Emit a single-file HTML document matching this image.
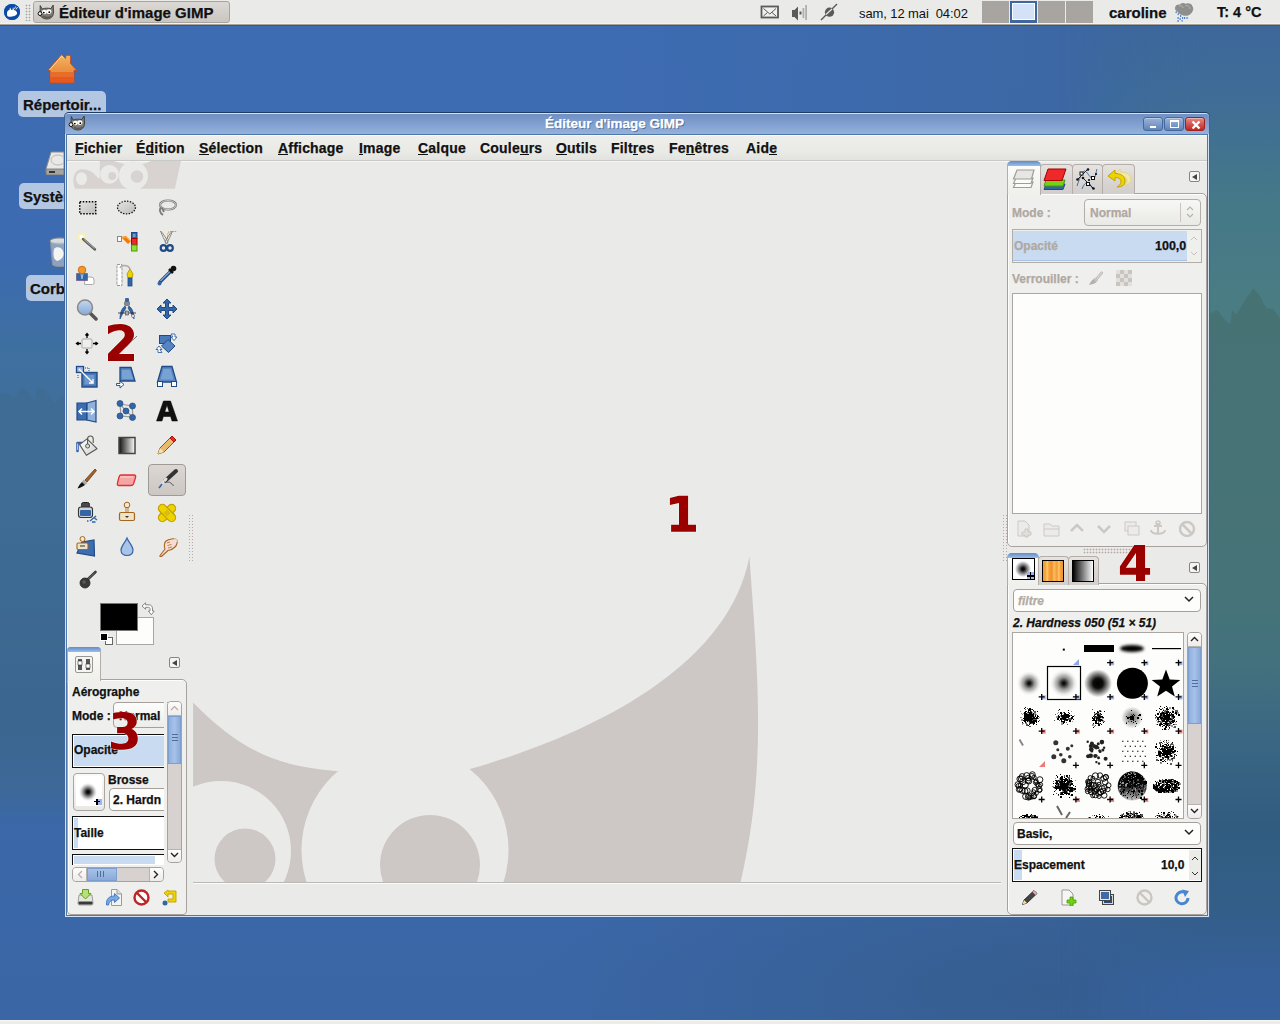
<!DOCTYPE html>
<html><head><meta charset="utf-8">
<style>
*{margin:0;padding:0;box-sizing:border-box}
html,body{width:1280px;height:1024px;overflow:hidden;font-family:"Liberation Sans",sans-serif;}
body{position:relative;background:#3c69ad;}
.a{position:absolute}
.b{font-weight:bold}
.b,.lbl,.menu,.dl{-webkit-text-stroke:0.25px currentColor}
#desk{left:0;top:0;width:1280px;height:1024px;background:
 radial-gradient(ellipse 520px 160px at 1050px 990px,rgba(48,86,130,0.5),rgba(48,86,130,0) 100%),
 linear-gradient(90deg,rgba(60,100,150,0) 0px,rgba(60,100,150,0) 600px,rgba(60,100,150,0.3) 900px,rgba(58,98,145,0.6) 1280px),
 linear-gradient(180deg,#3d6cb3 0px,#3d6bb1 300px,#3c69aa 700px,#3a66a6 1024px);}
#deskR{left:1060px;top:24px;width:220px;height:996px;
 background:linear-gradient(180deg,#3d679a 0px,#3f6d96 76px,#457888 176px,#4a7c84 266px,#4a7c84 300px,#467676 560px,#43717e 640px,#3a6684 720px,#315c80 800px,#335e88 880px,#36609a 960px,#37609c 996px);
 -webkit-mask-image:linear-gradient(90deg,transparent 0px,rgba(0,0,0,0.7) 80px,#000 150px);}
#deskL{left:0;top:24px;width:120px;height:996px;
 background:linear-gradient(180deg,rgba(62,108,158,0) 0px,rgba(62,108,158,0) 230px,#3f70a0 330px,#3f6f9c 376px,#3d6a92 546px,#3b668f 696px,#3d6898 766px,rgba(58,100,164,0) 800px);
 -webkit-mask-image:linear-gradient(90deg,#000 0px,#000 64px,transparent 120px);}
#panel{left:0;top:0;width:1280px;height:25px;background:#eaebe8;border-bottom:1px solid #aaa39b;box-shadow:0 1px 0 rgba(30,80,150,0.6)}
#panel:after{content:"";position:absolute;left:0;right:0;bottom:0;height:1px;background:#f2f3f0}
.ptxt{font-size:14px;color:#111;top:4px;white-space:nowrap}
.dl{background:#b3c7e3;border-radius:5px;font-size:15px;font-weight:bold;color:#111;white-space:nowrap;overflow:hidden;line-height:27px}
#win{left:65px;top:113px;width:1144px;height:803px;background:#eaebe8;border:1px solid #2e5284;border-radius:6px 6px 0 0}
#title{left:0;top:0;width:1142px;height:21px;background:linear-gradient(180deg,#6e8fc2 0%,#8aa8d6 60%,#9ab6e0 100%);border-radius:5px 5px 0 0}
.tbtn{top:117px;width:20px;height:14px;border:1px solid #44679c;border-radius:3px;background:linear-gradient(180deg,#98b2d8 0%,#7f9ccb 50%,#5e83b8 100%);box-shadow:inset 0 1px 0 rgba(255,255,255,0.35)}
.red2{border-color:#a51e1e;background:linear-gradient(180deg,#e48a84 0%,#d55650 50%,#b92a26 100%)}
.menu{top:140px;font-size:14px;font-weight:bold;color:#111;white-space:nowrap;letter-spacing:0.2px}
.menu u{text-decoration:none;position:relative}
.menu u:after{content:"";position:absolute;left:0;right:0;top:14px;height:1.4px;background:#111}
.arrbox{width:11px;height:11px;border:1px solid #8a8580;border-radius:2px;background:#f4f4f2}
.arrbox:after{content:"";position:absolute;left:2px;top:2px;border-right:5px solid #444;border-top:3.5px solid transparent;border-bottom:3.5px solid transparent}
.tabi{height:30px;border:1px solid #b5aea8;border-bottom:none;border-radius:4px 4px 0 0;background:linear-gradient(180deg,#e6e3e0,#d8d4d1 60%,#d2cecb)}
.lbl{font-size:12px;font-weight:bold;white-space:nowrap;color:#111;margin-top:1px}
.lbl.dis{color:#b0a8a2}
.red{color:#9a0000;font-weight:bold;font-size:50px;line-height:50px}
</style></head><body>
<div id="desk" class="a"></div><div id="deskR" class="a"></div><div id="deskL" class="a"></div><svg class="a" style="left:0;top:280px" width="1280" height="500" viewBox="0 280 1280 500"><defs><linearGradient id="trR" x1="0" y1="0" x2="0" y2="1"><stop offset="0" stop-color="#467274"/><stop offset="0.6" stop-color="#467276" stop-opacity="0.8"/><stop offset="1" stop-color="#43707e" stop-opacity="0"/></linearGradient><linearGradient id="trL" x1="0" y1="0" x2="0" y2="1"><stop offset="0" stop-color="#3e6b92" stop-opacity="0.8"/><stop offset="0.7" stop-color="#3e6b92" stop-opacity="0.4"/><stop offset="1" stop-color="#3e6b92" stop-opacity="0"/></linearGradient></defs>
<path d="M1190 318 L1208 314 L1217.4 310.3 L1226 321 L1230.3 323.8 L1232 310.8 L1237 314 L1245 300 L1253.5 288.1 L1260 296 L1266 308 L1273 309 L1280 318 L1280 700 L1190 700 Z" fill="url(#trR)"/>
<path d="M0 393 L6 393 L14 398 L22 387 L30 394 L35 402 L37 387 L45 390 L55 403 L62 395 L70 400 L70 640 L0 640 Z" fill="url(#trL)"/>
</svg>

<div class="a" style="left:0;top:1020px;width:1280px;height:4px;background:#edece9;border-top:1px solid #f8f8f4"></div>

<!-- top panel -->
<div id="panel" class="a"></div>
<div class="a" style="left:4px;top:4px;width:16px;height:16px;border-radius:50%;background:#1f5fb5"></div>
<div class="a" style="left:33px;top:1px;width:197px;height:22px;border:1px solid #a9a49f;border-radius:3px;background:linear-gradient(180deg,#dcd8d4,#c9c5c1)"></div>
<div class="a ptxt b" style="left:59px;font-size:15px;top:4px">Éditeur d'image GIMP</div>
<div class="a ptxt" style="left:859px;font-size:13px;top:6px;letter-spacing:-0.1px">sam, 12 mai&nbsp; 04:02</div>
<div class="a" style="left:982px;top:1px;width:27px;height:22px;background:#a8a4a0"></div>
<div class="a" style="left:1010px;top:1px;width:27px;height:22px;background:#d4e2f7;border:2px solid #3e66a0;border-bottom-width:3px;box-shadow:inset 0 0 0 1px #fff"></div>
<div class="a" style="left:1038px;top:1px;width:27px;height:22px;background:#a8a4a0"></div>
<div class="a" style="left:1066px;top:1px;width:27px;height:22px;background:#a8a4a0"></div>
<div class="a ptxt b" style="left:1109px;font-size:15px;top:3.5px">caroline</div>
<div class="a ptxt b" style="left:1217px;font-size:14.5px;top:4px">T: 4 °C</div>

<!-- desktop icons -->
<svg class="a" style="left:44px;top:50px" width="36" height="36" viewBox="44 50 36 36"><defs><linearGradient id="hroof" x1="0" y1="0" x2="0" y2="1"><stop offset="0" stop-color="#f2b865"/><stop offset="0.5" stop-color="#ea9444"/><stop offset="1" stop-color="#e8853a"/></linearGradient></defs>
<path d="M47.5 70.6 L61.7 54.5 L65.5 58.5 L66 55.3 L70.6 55.3 L70.6 63.5 L76.9 70.6 L74 70.6 L74 82.8 L50.1 82.8 L50.1 70.6 Z" fill="url(#hroof)" stroke="#c8441a" stroke-width="0.9"/>
<rect x="50.6" y="72" width="23" height="5" fill="#e96d2a"/><rect x="50.6" y="77" width="23" height="5.4" fill="#e8581f"/>
<path d="M49.5 70 L61.7 56 L64 58.5" stroke="#f7d79a" stroke-width="1" fill="none"/></svg>
<div class="a dl" style="left:18px;top:91px;width:88px;height:26px;padding-left:5px">Répertoir...</div>
<svg class="a" style="left:44px;top:148px" width="22" height="30"><path d="M7 4 L20 4 L20 25 L2 25 L2 21 Z" fill="#e8e8e6" stroke="#8a8a88" stroke-width="1"/><path d="M2 21 L20 21 L20 27 L2 27 Z" fill="#a5a5a3" stroke="#6f6f6d" stroke-width="0.8"/><rect x="5" y="23" width="6" height="2" fill="#333"/><ellipse cx="14" cy="12" rx="7" ry="5" fill="none" stroke="#b8b8b6"/></svg>
<div class="a dl" style="left:19px;top:183px;width:50px;height:26px;padding-left:4px">Système</div>
<svg class="a" style="left:48px;top:236px" width="20" height="34"><ellipse cx="12" cy="5" rx="10" ry="3" fill="#d8dcdf" stroke="#8d9296"/><path d="M2.5 6 L4.5 29 C7 31 17 31 19.5 29 L21.5 6" fill="#c2c8cc" fill-opacity="0.6" stroke="#8d9296"/><path d="M6 13 C8 10 14 11 15 15 C17 19 14 24 9 25 C5 23 5 18 6 13Z" fill="#f4f4f2"/></svg>
<div class="a dl" style="left:26px;top:275px;width:50px;height:26px;padding-left:4px">Corbeille</div>
<!-- window -->
<div class="a" style="left:64px;top:112px;width:1146px;height:806px;background:#3f649b;border-radius:5px 5px 0 0;border-top:1px solid #1f3b62"></div>
<div class="a" style="left:65px;top:113px;width:1144px;height:804px;background:#d3e1f5;border-radius:4px 4px 0 0"></div>
<div class="a" style="left:65px;top:114px;width:1144px;height:20px;background:linear-gradient(180deg,#7191c3 0%,#7f9ecd 45%,#95b2dc 100%);border-radius:3px 3px 0 0"></div>
<div class="a" style="left:66px;top:134px;width:1142px;height:782px;background:#4f78ad"></div>
<div class="a" style="left:67px;top:135px;width:1140px;height:780px;background:#eaebe8;border-top:1px solid #fafaf6;border-left:1px solid #f6f6f2"></div>
<!-- menubar -->
<div class="a" style="left:67px;top:136px;width:1140px;height:25px;background:linear-gradient(180deg,#eeeeeb 0%,#e9e9e6 70%,#e2e2df 100%);border-bottom:1px solid #c9c9c5"></div>
<div class="a" style="left:67px;top:161px;width:1140px;height:1px;background:#f6f6f3"></div>
<!-- title bar -->
<div class="a b" style="left:545px;top:116px;font-size:13.5px;color:#fff;white-space:nowrap;text-shadow:1px 1px 0 rgba(30,50,90,0.55)">Éditeur d'image GIMP</div>
<div class="a tbtn" style="left:1143px"><div class="a" style="left:6px;top:8px;width:6px;height:2px;background:#fff"></div></div>
<div class="a tbtn" style="left:1164px"><div class="a" style="left:5px;top:2px;width:9px;height:8px;border:1.5px solid #fff;border-top-width:2px"></div></div>
<div class="a tbtn red2" style="left:1185px"><svg class="a" style="left:5px;top:1.5px" width="10" height="10" viewBox="0 0 10 10"><path d="M1.5 1.5L8.5 8.5M8.5 1.5L1.5 8.5" stroke="#fff" stroke-width="2.4"/></svg></div>
<!-- panel icons -->
<svg class="a" style="left:3px;top:3px" width="18" height="18"><circle cx="9" cy="9" r="8" fill="#0c4aa8"/><path d="M4 11 C4 8 5 7 6.5 7 L7 4.5 L8.5 7 L9.5 7 L10 4 L11 7 C13 7.5 14.5 9 14 11 C12.5 13.5 8 14 5 13.5 C4.3 13 4 12 4 11Z" fill="#fff"/><path d="M11.5 6 L12.5 3.5 M13 6.5 L14.5 4" stroke="#fff" stroke-width="0.8"/></svg>
<div class="a" style="left:25px;top:4px;width:6px;height:17px;background-image:radial-gradient(circle,#aaa5a0 0.8px,transparent 1.1px);background-size:3px 3px"></div>
<svg class="a" style="left:37px;top:4px" width="18" height="16" viewBox="0 0 18 16"><path d="M3.2 1.5 L5.2 5 C8 4 11 4 13.8 4.6 L16.2 1 L16.6 8 C16.6 12 14 15 10 15 C7 15 4.5 13.5 3 11.5 Z" fill="#807c72" stroke="#2e2e2c" stroke-width="0.8" stroke-linejoin="round"/><path d="M6 12 C8 14 12 14 14.5 12" stroke="#5a564e" stroke-width="1.5" fill="none"/><ellipse cx="7.3" cy="8" rx="2.4" ry="2.3" fill="#fff"/><ellipse cx="11.8" cy="7.6" rx="2.6" ry="2.4" fill="#fff"/><circle cx="6.8" cy="8.6" r="0.9" fill="#000"/><circle cx="12.3" cy="8.2" r="0.9" fill="#000"/><circle cx="3" cy="9.6" r="1.9" fill="#f4f4f4" stroke="#111" stroke-width="1"/></svg>
<svg class="a" style="left:760px;top:5px" width="20" height="14"><rect x="1.5" y="1.5" width="16.5" height="11" fill="#f0f0ee" stroke="#5a5a5a" stroke-width="1.8"/><path d="M3.5 3.5 L9.8 9 L16 3.5 M3.5 11 L7.5 7.5 M16 11 L12 7.5" stroke="#5a5a5a" stroke-width="1" fill="none"/></svg>
<svg class="a" style="left:790px;top:4px" width="20" height="18"><path d="M2 6 H4.5 L8 2.5 V16.5 L4.5 13 H2 Z" fill="#5a5a5a"/><rect x="9.5" y="7.5" width="2" height="3" fill="#5a5a5a"/><rect x="12.5" y="4" width="1.8" height="10" fill="#b0b0ae"/><rect x="15.2" y="1" width="1.8" height="15" fill="#b0b0ae"/></svg>
<svg class="a" style="left:819px;top:3px" width="20" height="18"><path d="M2 17 L18 1" stroke="#5a5a5a" stroke-width="1.5"/><circle cx="10.5" cy="9.2" r="4.6" fill="#5a5a5a"/><path d="M7 11.5 L13 6" stroke="#edecea" stroke-width="1.1"/></svg>
<svg class="a" style="left:1173px;top:2px" width="22" height="20"><g fill="#4b7ed0"><rect x="3" y="9" width="1.2" height="2" transform="rotate(20 3 9)"/><rect x="5" y="11" width="1.2" height="2" transform="rotate(20 5 11)"/><rect x="7" y="13" width="1.2" height="2"/><rect x="4.5" y="15" width="1.2" height="2"/><rect x="6.5" y="16" width="1.2" height="2"/><rect x="4.5" y="18" width="1.2" height="2"/><rect x="9" y="15" width="1.2" height="2"/><rect x="11" y="15" width="1.2" height="2"/><rect x="13.5" y="15" width="1.2" height="2"/><rect x="8.5" y="18" width="1.2" height="1.6"/></g><path d="M2 6 C2 3 5 2 7 2.5 C8 0.8 11 0.5 12.5 1.8 C15 0.5 19 1.5 19.5 4.5 C21 6 20 10 18 11.5 C16 14 12 14.5 9 13 C7 12.5 5 11 4 9 C2.5 8.5 2 7.5 2 6Z" fill="#8e8e8c"/><path d="M6 4 C8 3 10 4 10 6 M12 4 C14 3 17 4 17 7" stroke="#b5b5b3" stroke-width="1" fill="none"/></svg>
<!-- title bar gimp icon -->
<svg class="a" style="left:68px;top:115px" width="18" height="16" viewBox="0 0 18 16"><path d="M3.2 1.5 L5.2 5 C8 4 11 4 13.8 4.6 L16.2 1 L16.6 8 C16.6 12 14 15 10 15 C7 15 4.5 13.5 3 11.5 Z" fill="#807c72" stroke="#2e2e2c" stroke-width="0.8" stroke-linejoin="round"/><path d="M6 12 C8 14 12 14 14.5 12" stroke="#5a564e" stroke-width="1.5" fill="none"/><ellipse cx="7.3" cy="8" rx="2.4" ry="2.3" fill="#fff"/><ellipse cx="11.8" cy="7.6" rx="2.6" ry="2.4" fill="#fff"/><circle cx="6.8" cy="8.6" r="0.9" fill="#000"/><circle cx="12.3" cy="8.2" r="0.9" fill="#000"/><circle cx="3" cy="9.6" r="1.9" fill="#f4f4f4" stroke="#111" stroke-width="1"/></svg>
<div class="a menu" style="left:75px"><u>F</u>ichier</div>
<div class="a menu" style="left:136px">É<u>d</u>ition</div>
<div class="a menu" style="left:199px"><u>S</u>élection</div>
<div class="a menu" style="left:278px"><u>A</u>ffichage</div>
<div class="a menu" style="left:359px"><u>I</u>mage</div>
<div class="a menu" style="left:418px"><u>C</u>alque</div>
<div class="a menu" style="left:480px">Coule<u>u</u>rs</div>
<div class="a menu" style="left:556px"><u>O</u>utils</div>
<div class="a menu" style="left:611px">Filt<u>r</u>es</div>
<div class="a menu" style="left:669px">Fe<u>n</u>êtres</div>
<div class="a menu" style="left:746px">Aid<u>e</u></div>

<!-- canvas -->
<svg class="a" style="left:193px;top:540px" width="809" height="343" viewBox="193 540 809 343">
 <path d="M193.1 702.5 C238.6 748.4 273.7 766.4 338.1 771.2 L404 790 L469.8 769.1 C571.6 740.3 727.3 675.2 749.4 556.6 C757.6 671.5 767.3 768.3 740.6 882.0 L193 882 Z" fill="#cdc8c6"/>
 <circle cx="221" cy="851" r="70" fill="#eaebe8"/>
 <circle cx="245" cy="859" r="30.5" fill="#cdc8c6"/>
 <circle cx="405" cy="850" r="103.5" fill="#eaebe8"/>
 <circle cx="430" cy="865" r="50" fill="#cdc8c6"/>
</svg>
<div class="a" style="left:193px;top:882px;width:808px;height:1px;background:#b9b9b5"></div>
<div class="a" style="left:193px;top:883px;width:808px;height:1px;background:#fbfbf8"></div>
<!-- toolbox -->
<svg class="a" style="left:68px;top:158px" width="120" height="36" viewBox="68 158 120 36">
 <path d="M75.2 188.7 C72.5 183 72.5 175 77 171 C80 168.5 86 168.5 91 171.6 C94 173.5 96.5 176 98.1 178.2 L99.8 178.2 L99.8 161 L113.6 161 L124 164.1 L143.3 164.1 L151.3 161 L181 161 L174.9 188.7 Z" fill="#d8d3d1"/>
 <circle cx="109.4" cy="174.4" r="9.3" fill="#eaebe8"/>
 <circle cx="112.2" cy="176" r="4" fill="#d8d3d1"/>
 <circle cx="133.4" cy="175.8" r="14.5" fill="#eaebe8"/>
 <circle cx="137" cy="176.5" r="6.3" fill="#d8d3d1"/>
 <ellipse cx="81.5" cy="178.6" rx="5.5" ry="6.4" fill="#eaebe8"/>
</svg>
<!-- selected tool button -->
<div class="a" style="left:148px;top:464px;width:38px;height:32px;border:1px solid #a09a96;border-radius:4px;background:linear-gradient(180deg,#dcd7d3,#ccc7c3)"></div>

<!-- row0 -->
<svg class="a" style="left:75px;top:195px" width="24" height="24"><defs><linearGradient id="gg" x1="0" y1="0" x2="1" y2="1"><stop offset="0" stop-color="#e4e4e2"/><stop offset="1" stop-color="#bdbdbb"/></linearGradient></defs>
 <rect x="4.75" y="6.75" width="16" height="12" fill="url(#gg)" stroke="#000" stroke-width="1.5" stroke-dasharray="1.5 1.5"/></svg>
<svg class="a" style="left:115px;top:195px" width="24" height="24"><ellipse cx="11.5" cy="12.5" rx="9" ry="6.3" fill="url(#gg)" stroke="#111" stroke-width="1.3" stroke-dasharray="1.4 1.4"/></svg>
<svg class="a" style="left:155px;top:195px" width="24" height="24"><ellipse cx="13" cy="10" rx="8" ry="4.5" fill="none" stroke="#7a7a78" stroke-width="2.2"/><ellipse cx="13" cy="10" rx="8" ry="4.5" fill="none" stroke="#d8d8d6" stroke-width="0.8"/><path d="M6 12 C4 15 5 18 8 20 M7 13 L9 17" stroke="#7a7a78" stroke-width="1.8" fill="none"/></svg>
<!-- row1 -->
<svg class="a" style="left:75px;top:229px" width="24" height="24"><circle cx="6.5" cy="8" r="4" fill="#fff3a0" opacity="0.8"/><circle cx="6.5" cy="8" r="2" fill="#fff"/><path d="M8 10 L20 20.5" stroke="#5a5a58" stroke-width="2.4" stroke-linecap="round"/><path d="M8.5 10 L19.5 19.6" stroke="#c8c8c4" stroke-width="0.8"/></svg>
<svg class="a" style="left:115px;top:229px" width="24" height="24"><rect x="2.5" y="7.5" width="4" height="5" fill="#fff" stroke="#888"/><path d="M6 8 L11 7 L16 12 L13 15 Z" fill="#f57900"/><path d="M7 9 L11 8 L15 12" stroke="#fcaf3e" fill="none"/><rect x="16.5" y="3.5" width="5.5" height="6" fill="#3465a4" stroke="#204a87"/><rect x="18" y="5" width="2.5" height="3" fill="#729fcf"/><rect x="16.5" y="9.5" width="5.5" height="6.5" fill="#ef2929" stroke="#a40000"/><rect x="16.5" y="16" width="5.5" height="6" fill="#8ae234" stroke="#4e9a06"/></svg>
<svg class="a" style="left:155px;top:229px" width="24" height="24"><path d="M5.5 2 C7 6 9.5 11 11.5 15 L13 13 C11 9 8 4 5.5 2Z M17.5 2 C16 6 13.5 11 11.5 15 L10 13 C12 9 15 4 17.5 2Z" fill="#eeeeec" stroke="#888a85" stroke-width="1"/><circle cx="8.5" cy="19" r="2.8" fill="none" stroke="#204a87" stroke-width="2.2"/><circle cx="15" cy="19" r="2.8" fill="none" stroke="#204a87" stroke-width="2.2"/><path d="M12.5 10 C12.5 5 13 2.5 15 2.5 L22 2.5" stroke="#f57900" stroke-width="1.1" stroke-dasharray="1.2 1" fill="none"/></svg>
<!-- row2 -->
<svg class="a" style="left:75px;top:263px" width="24" height="24"><path d="M10 14 h6 a3 3 0 0 1 3 3 v3 a1.5 1.5 0 0 1 -1.5 1.5 h-8 Z" fill="#fff" stroke="#aaa"/><rect x="1.5" y="10.5" width="11" height="7" fill="#3465a4" stroke="#5c3566" stroke-dasharray="1 1"/><circle cx="7" cy="7" r="3.8" fill="#f09a2a" stroke="#ce5c00" stroke-width="0.8"/><path d="M6 11 L7 16 L8 11" stroke="#9cc0ea" fill="none"/></svg>
<svg class="a" style="left:115px;top:263px" width="24" height="24"><rect x="2" y="1.5" width="5" height="21" fill="#fff" stroke="#999" stroke-dasharray="3 1"/><path d="M5 5 C6 2 13 1 15 6" stroke="#aaa" stroke-width="1.5" fill="none"/><path d="M15 6 L12 11 L13 15 L17 15 L18 11 Z" fill="#edd400" stroke="#c4a000"/><rect x="13" y="15" width="4" height="8" fill="#3465a4" stroke="#204a87" stroke-width="0.8"/></svg>
<svg class="a" style="left:155px;top:263px" width="24" height="24"><path d="M5 19 L16 8" stroke="#204a87" stroke-width="3.2" stroke-linecap="round"/><path d="M5.5 18 L15.5 8" stroke="#cfe0f5" stroke-width="1"/><path d="M14 6 L18 10" stroke="#111" stroke-width="2.5"/><circle cx="18.5" cy="5.5" r="2.8" fill="#111"/><circle cx="4.5" cy="20.5" r="2" fill="#3465a4"/></svg>
<!-- row3 -->
<svg class="a" style="left:75px;top:297px" width="24" height="24"><defs><linearGradient id="zg" x1="0" y1="0" x2="0" y2="1"><stop offset="0" stop-color="#c5d8f0"/><stop offset="1" stop-color="#86a9d8"/></linearGradient></defs><path d="M15 16 L21 22" stroke="#555" stroke-width="3.5" stroke-linecap="round"/><circle cx="10" cy="10.5" r="7.5" fill="url(#zg)" stroke="#8a8a88" stroke-width="1.5"/></svg>
<svg class="a" style="left:115px;top:297px" width="24" height="24"><rect x="10" y="1" width="4" height="4" rx="1" fill="#3465a4"/><rect x="9.5" y="4.5" width="5" height="4" rx="1" fill="#888" stroke="#555" stroke-width="0.6"/><path d="M10 9 C6 12 5 17 5 22 L8 16 L11 11 Z M14 9 C18 12 19 17 19 22 L16 16 L13 11 Z" fill="#3465a4" stroke="#204a87" stroke-width="0.7"/><path d="M3 16 L21 16" stroke="#222" stroke-width="0.8"/><rect x="10.5" y="14" width="3" height="4" fill="#aaa" stroke="#444" stroke-width="0.6"/><circle cx="18" cy="19" r="1.5" fill="#fff" stroke="#444" stroke-width="0.6"/></svg>
<svg class="a" style="left:155px;top:297px" width="24" height="24"><path d="M12 2 L16 6 L13.5 6 L13.5 10.5 L18 10.5 L18 8 L22 12 L18 16 L18 13.5 L13.5 13.5 L13.5 18 L16 18 L12 22 L8 18 L10.5 18 L10.5 13.5 L6 13.5 L6 16 L2 12 L6 8 L6 10.5 L10.5 10.5 L10.5 6 L8 6 Z" fill="#3465a4" stroke="#204a87" stroke-width="1" stroke-linejoin="round"/></svg>
<!-- row4 -->
<svg class="a" style="left:75px;top:331px" width="24" height="24"><rect x="7" y="8" width="10" height="9" rx="1" fill="#eeeeec" stroke="#aaa"/><path d="M12 7 V3 M10.5 4.5 L12 2.5 L13.5 4.5 M12 18 V22 M10.5 20.5 L12 22.5 L13.5 20.5 M6 12.5 H2 M3.5 11 L1.5 12.5 L3.5 14 M18 12.5 H22 M20.5 11 L22.5 12.5 L20.5 14" stroke="#000" stroke-width="1.3" fill="none"/></svg>
<svg class="a" style="left:115px;top:331px" width="24" height="24"><path d="M22 5 L14 13 M14 13 C13 15 11 16 9 16" stroke="#777" stroke-width="1" fill="none"/></svg>
<svg class="a" style="left:155px;top:331px" width="24" height="24"><rect x="4.5" y="4.5" width="11" height="8" fill="#4a7ab8" stroke="#204a87"/><path d="M13 8.5 L20 15 L13.5 21.5 L6.5 15 Z" fill="#5585c2" stroke="#204a87"/><path d="M16 3 L20 3 L20 6 L22 6 L19 9.5 L16 6 L18 6 Z" fill="#fff" stroke="#3465a4" stroke-width="0.9"/><path d="M7 21.5 L3 21.5 L3 18.5 L1 18.5 L4 15 L7 18.5 L5 18.5 Z" fill="#fff" stroke="#3465a4" stroke-width="0.9"/></svg>
<!-- row5 -->
<svg class="a" style="left:75px;top:365px" width="24" height="24"><rect x="7" y="7.5" width="15" height="14.5" fill="#4a79b8" stroke="#204a87" stroke-width="1.4"/><rect x="9.5" y="10" width="10" height="9.5" fill="#6f98cc"/><rect x="1.5" y="1.5" width="7" height="6" fill="#9bb8e0" stroke="#204a87" stroke-width="1.3"/><path d="M4 4 L18 18 M18 14 V18 H14" stroke="#fff" stroke-width="1.3" fill="none"/><path d="M10 3 H14 M14 3 V8 M3 10 V14" stroke="#204a87" stroke-dasharray="1 1"/></svg>
<svg class="a" style="left:115px;top:365px" width="24" height="24"><path d="M5 2.5 L16 2.5 L20 16 L5 16 Z" fill="#5a87c2" stroke="#204a87" stroke-width="1.3"/><path d="M7 5 L15 5 L18 14 L7 14 Z" fill="#78a1d4"/><path d="M1.5 18.5 H5 V16 L9 19.5 L5 23 V20.5 H1.5 Z" fill="#fff" stroke="#204a87" stroke-width="0.9"/></svg>
<svg class="a" style="left:155px;top:365px" width="24" height="24"><path d="M7 1.5 L17 1.5 L21.5 17 L2.5 17 Z" fill="#5a87c2" stroke="#204a87" stroke-width="1.3"/><path d="M8.5 4 L15.5 4 L18.5 14.5 L5.5 14.5 Z" fill="#78a1d4"/><rect x="2.5" y="16.5" width="5" height="5" fill="#fff" stroke="#204a87"/><rect x="16.5" y="16.5" width="5" height="5" fill="#fff" stroke="#204a87"/></svg>
<!-- row6 -->
<svg class="a" style="left:75px;top:399px" width="24" height="24"><path d="M2 4 L12 4 L12 21 L2 21 Z" fill="#3c6db0" stroke="#204a87" stroke-width="1.2"/><path d="M12 4 L21 1.5 L21 23 L12 21 Z" fill="#8fb1dc" stroke="#204a87" stroke-width="1.2"/><path d="M4 12.5 H19 M7 9.5 L4 12.5 L7 15.5 M16 9.5 L19 12.5 L16 15.5" stroke="#fff" stroke-width="1.5" fill="none"/></svg>
<svg class="a" style="left:115px;top:399px" width="24" height="24"><path d="M5 5 L17 7 L18 18 L6 17 Z M5 5 L11 12 L18 18" stroke="#999" stroke-width="1.2" fill="none"/><g fill="#3465a4" stroke="#204a87" stroke-width="0.7"><circle cx="5" cy="4.5" r="3"/><circle cx="17.5" cy="7" r="3"/><circle cx="11" cy="12" r="3"/><circle cx="5" cy="17" r="3"/><circle cx="17.5" cy="18.5" r="3"/></g></svg>
<svg class="a" style="left:155px;top:399px" width="24" height="24"><path d="M1.5 22 L8.5 2 L15.5 2 L22.5 22 L17 22 L15.6 17.5 L8.4 17.5 L7 22 Z M9.8 13 L14.2 13 L12 6 Z" fill="#111" stroke="#000" stroke-width="0.5" fill-rule="evenodd"/></svg>
<!-- row7 -->
<svg class="a" style="left:75px;top:433px" width="24" height="24"><defs><linearGradient id="bk" x1="0" y1="0" x2="1" y2="1"><stop offset="0" stop-color="#fff"/><stop offset="1" stop-color="#d0d0ce"/></linearGradient></defs><path d="M2.5 18 V10 H7" stroke="#3a5fa8" stroke-width="2.6" stroke-linecap="round" stroke-linejoin="round" fill="none"/><path d="M2.5 17 V10.5" stroke="#c8daf4" stroke-width="0.8"/><path d="M4.6 11.6 L12 5.9 L22 15.7 L11.4 22.3 Z" fill="url(#bk)" stroke="#555753" stroke-width="1.1" stroke-linejoin="round"/><path d="M12.6 12.5 V6 C12.6 2 18.2 2 18.2 6 V10" stroke="#555753" stroke-width="1.1" fill="none"/><circle cx="12.6" cy="13" r="2" fill="#ddd" stroke="#555753" stroke-width="1"/></svg>
<svg class="a" style="left:115px;top:433px" width="24" height="24"><defs><linearGradient id="bl" x1="0" y1="0" x2="1" y2="0"><stop offset="0" stop-color="#111"/><stop offset="1" stop-color="#fff"/></linearGradient></defs><rect x="4" y="4.5" width="16" height="16" fill="url(#bl)" stroke="#444" stroke-width="1.5"/></svg>
<svg class="a" style="left:155px;top:433px" width="24" height="24"><path d="M3 21 L5 15 L17 3 L21 7 L9 19 Z" fill="#e9b96e" stroke="#8f5902" stroke-width="1"/><path d="M17 3 L21 7 L19 9 L15 5 Z" fill="#ef2929" stroke="#a40000" stroke-width="0.8"/><path d="M3 21 L5 15 L9 19 Z" fill="#f3dfb8"/></svg>
<!-- row8 -->
<svg class="a" style="left:75px;top:467px" width="24" height="24"><path d="M10 13 L20 2 L21.5 3.5 L12 15 Z" fill="#a0622a" stroke="#6b3c13" stroke-width="0.8"/><path d="M8.5 12.5 L12.5 16 L10 18 L7 15 Z" fill="#aaa"/><path d="M7 15 L10 18 C7 20 5 21 2.5 21.5 C3.5 19 5 17 7 15Z" fill="#111"/></svg>
<svg class="a" style="left:115px;top:467px" width="24" height="24"><path d="M6 8 L19 8 C20.5 8 21 9 20.5 10.5 L18.5 17 C18 18 17.5 18.5 16 18.5 L4 18.5 C2.5 18.5 2 17.5 2.5 16 L4 10 C4.5 8.5 5 8 6 8Z" fill="#f4a6a6" stroke="#e03030" stroke-width="1.3"/><path d="M5 10 L18 10" stroke="#fbd0d0" stroke-width="1.2"/></svg>
<svg class="a" style="left:155px;top:467px" width="24" height="24"><path d="M21 4 L10 14" stroke="#333" stroke-width="4" stroke-linecap="round"/><path d="M11 12 L7 17" stroke="#ddd" stroke-width="3" stroke-linecap="round"/><path d="M7 17 L4 21" stroke="#3465a4" stroke-width="1.5"/><path d="M9 15 C12 16 14 14 16 16 C18 18 17 19 19 18" stroke="#555" stroke-width="0.9" fill="none"/></svg>
<!-- row9 -->
<svg class="a" style="left:75px;top:501px" width="24" height="24"><rect x="6.5" y="1.5" width="8" height="5" rx="2" fill="#4a4a4a" stroke="#222"/><rect x="3.5" y="6" width="14" height="10.5" rx="2.5" fill="#d0d4d8" stroke="#2e3436" stroke-width="1.1"/><rect x="5" y="9" width="11" height="6" rx="1" fill="#3465a4"/><path d="M15 20 L21 15 M17 21 L20.5 21 M19.5 17 L22 19 M12 20 L13.5 20" stroke="#3465a4" stroke-width="1.4"/></svg>
<svg class="a" style="left:115px;top:501px" width="24" height="24"><circle cx="12" cy="4" r="2.8" fill="#f4ead4" stroke="#a5651e" stroke-width="1"/><rect x="11" y="6.5" width="2" height="5" fill="#f4ead4" stroke="#a5651e" stroke-width="0.8"/><rect x="4.5" y="11.5" width="15" height="8" rx="1.5" fill="#ede3c7" stroke="#a5651e" stroke-width="1.2"/><path d="M10 15 L14 15 L12 17Z" fill="#333"/></svg>
<svg class="a" style="left:155px;top:501px" width="24" height="24"><g fill="#edd400" stroke="#c4a000" stroke-width="1.2"><rect x="8" y="1.5" width="8" height="21" rx="4" transform="rotate(45 12 12)"/><rect x="8" y="1.5" width="8" height="21" rx="4" transform="rotate(-45 12 12)"/></g><rect x="9.5" y="9.5" width="5" height="5" fill="#d8bc10" transform="rotate(45 12 12)"/></svg>
<!-- row10 -->
<svg class="a" style="left:75px;top:535px" width="24" height="24"><path d="M7 7 L19 5 L19.5 21 L2 18 Z" fill="#3c6db0" stroke="#204a87" stroke-width="1.2"/><circle cx="7.5" cy="4" r="2.5" fill="#f4ead4" stroke="#a5651e"/><rect x="2" y="8" width="11" height="6.5" rx="1.2" fill="#ede3c7" stroke="#a5651e" stroke-width="1.1"/><path d="M5 11 L10 11" stroke="#333"/></svg>
<svg class="a" style="left:115px;top:535px" width="24" height="24"><path d="M12 3 C14 8 18 11 18 15 C18 18.5 15.5 20.5 12 20.5 C8.5 20.5 6 18.5 6 15 C6 11 10 8 12 3Z" fill="#a8c4e8" stroke="#3465a4" stroke-width="1.2"/></svg>
<svg class="a" style="left:155px;top:535px" width="24" height="24"><path d="M11 6 C14 4 19 3 21.5 4.5 C23 6 22 10 20 12 C18 14 15 15.5 13 15.5 L7 21 C6 22 4.5 21.5 5 20.5 L10 14 C9 12 9 8 11 6Z" fill="#f6dcd2" stroke="#a5651e" stroke-width="1.1" stroke-linejoin="round"/><path d="M12 8 L15 7 M12.5 10.5 L16.5 9.5 M13 13 L17 12" stroke="#b8794a" stroke-width="0.9"/><path d="M19 4 L21.5 4.5 L22 7" stroke="#fff" stroke-width="1" fill="none" opacity="0.8"/></svg>
<!-- row11 -->
<svg class="a" style="left:75px;top:569px" width="24" height="24"><path d="M11 12 L20.5 3" stroke="#3a3a3a" stroke-width="2.6" stroke-linecap="round"/><path d="M12 11 L19.5 4" stroke="#777" stroke-width="0.8"/><circle cx="10" cy="14" r="5" fill="#3a3a3a" stroke="#222" stroke-width="0.8"/><circle cx="9" cy="13" r="1.8" fill="#5a5a5a"/></svg>

<!-- dotted handle -->
<div class="a" style="left:188px;top:514px;width:5px;height:48px;background-image:radial-gradient(circle,#b8a8a8 0.7px,transparent 1px);background-size:3px 3px"></div>

<!-- fg/bg colors -->
<div class="a" style="left:116px;top:617px;width:38px;height:28px;background:#fdfdfb;border:1px solid #a8a6a2"></div>
<div class="a" style="left:100px;top:603px;width:38px;height:28px;background:#000;border:1px solid #777"></div>
<div class="a" style="left:105px;top:637px;width:8px;height:8px;background:#fff;border:1px solid #666"></div>
<div class="a" style="left:100px;top:633px;width:8px;height:8px;background:#000;border:1px solid #fff"></div>
<svg class="a" style="left:141px;top:602px" width="14" height="14"><path d="M1 4 L4.5 0.8 L4.5 2.8 L8 2.8 C10.5 2.8 11.5 4.5 11.5 7 L11.5 9 L13.2 9 L10.3 12.8 L7.4 9 L9 9 L9 7.2 C9 6 8.5 5.3 7.5 5.3 L4.5 5.3 L4.5 7.2 Z" fill="#fff" stroke="#8a8682" stroke-width="1" stroke-linejoin="round"/></svg>
<!-- ===== tool options dock (3) ===== -->
<div class="a" style="left:67px;top:679px;width:120px;height:236px;background:#eff0ed;border:1px solid #a8a29e;border-radius:4px 5px 4px 4px;box-shadow:inset 1px 1px 0 #fdfdfb"></div>
<div class="a" style="left:67px;top:647px;width:34px;height:34px;background:linear-gradient(180deg,#fbfbf9,#efefec);border:1px solid #b5aea8;border-bottom:none;border-radius:4px 4px 0 0"></div>
<div class="a" style="left:67px;top:647px;width:34px;height:5px;background:linear-gradient(180deg,#5f8ccb,#9dbde6);border-radius:4px 4px 0 0"></div>
<div class="a" style="left:68px;top:680px;width:32px;height:2px;background:#efefec"></div>
<svg class="a" style="left:75px;top:656px" width="18" height="17"><rect x="0.5" y="0.5" width="17" height="16" rx="1.5" fill="#f4f4f2" stroke="#9a9692"/><rect x="3" y="3" width="4" height="11" fill="#555"/><rect x="11" y="3" width="4" height="11" fill="#555"/><rect x="3" y="5" width="4" height="4" fill="#fff" stroke="#333" stroke-width="0.6"/><rect x="11" y="8" width="4" height="4" fill="#fff" stroke="#333" stroke-width="0.6"/></svg>
<div class="a arrbox" style="left:169px;top:657px"></div>
<div class="a lbl" style="left:72px;top:684px">Aérographe</div>
<div class="a lbl" style="left:72px;top:708px">Mode :</div>
<div class="a" style="left:113px;top:702px;width:60px;height:26px;border:1px solid #a5a09c;border-radius:4px;background:linear-gradient(180deg,#fdfdfb,#ececea)"></div>
<div class="a lbl" style="left:119px;top:708px">Normal</div>
<div class="a" style="left:72px;top:734px;width:95px;height:34px;border:1px solid #111;background:#fff"></div>
<div class="a" style="left:74px;top:736px;width:98px;height:30px;background:#c9dbf0"></div>
<div class="a lbl" style="left:74px;top:742px">Opacite</div>
<div class="a" style="left:73px;top:773px;width:32px;height:38px;border:1px solid #aaa59f;border-radius:4px;background:linear-gradient(180deg,#fafaf8,#e8e8e5)"></div>
<div class="a" style="left:76px;top:776px;width:26px;height:30px;background:radial-gradient(circle at 12px 16px,#000 0px,#111 1.5px,rgba(0,0,0,0.55) 4px,rgba(0,0,0,0.15) 7px,rgba(0,0,0,0) 9px),#fff"></div>
<div class="a" style="left:97px;top:799px;width:5px;height:6px;background:#9fb4ef"></div>
<div class="a" style="left:94px;top:801px;width:6px;height:1.3px;background:#000"></div><div class="a" style="left:96.4px;top:798.5px;width:1.3px;height:6px;background:#000"></div>
<div class="a lbl" style="left:108px;top:772px">Brosse</div>
<div class="a" style="left:109px;top:788px;width:64px;height:23px;border:1px solid #a5a09c;border-radius:4px;background:#fdfdfb"></div>
<div class="a lbl" style="left:113px;top:792px">2. Hardn</div>
<div class="a" style="left:72px;top:816px;width:95px;height:34px;border:1px solid #111;background:#fff"></div>
<div class="a" style="left:74px;top:818px;width:4px;height:30px;background:#c9dbf0"></div>
<div class="a lbl" style="left:74px;top:825px">Taille</div>
<div class="a" style="left:72px;top:854px;width:95px;height:11px;border:1px solid #111;border-bottom:none;background:#fff"></div>
<div class="a" style="left:74px;top:856px;width:81px;height:8px;background:#c9dbf0"></div>
<!-- clip cover right of content -->
<div class="a" style="left:164px;top:700px;width:3px;height:167px;background:#efefec"></div>
<!-- v scrollbar -->
<div class="a" style="left:167px;top:701px;width:15px;height:162px;border:1px solid #a8a39f;border-radius:4px;background:#d7d2cf"></div>
<div class="a" style="left:168px;top:702px;width:13px;height:14px;background:linear-gradient(180deg,#fdfdfb,#eeeceb);border-radius:3px 3px 0 0;border-bottom:1px solid #b8b3af"></div>
<svg class="a" style="left:170px;top:705px" width="9" height="6"><path d="M1 5 L4.5 1.5 L8 5" stroke="#b3aeaa" stroke-width="1.2" fill="none"/></svg>
<div class="a" style="left:168px;top:716px;width:13px;height:48px;background:linear-gradient(90deg,#8fb0de,#a6c2e8 50%,#8aaad8);border:1px solid #7c9fd0"></div>
<div class="a" style="left:172px;top:734px;width:6px;height:1px;background:#4d6e9e;box-shadow:0 3px 0 #4d6e9e,0 6px 0 #4d6e9e"></div>
<div class="a" style="left:168px;top:849px;width:13px;height:13px;background:linear-gradient(180deg,#fdfdfb,#eeeceb);border-radius:0 0 3px 3px;border-top:1px solid #b8b3af"></div>
<svg class="a" style="left:170px;top:852px" width="9" height="6"><path d="M1 1 L4.5 4.5 L8 1" stroke="#222" stroke-width="1.4" fill="none"/></svg>
<!-- h scrollbar -->
<div class="a" style="left:72px;top:867px;width:92px;height:15px;border:1px solid #a8a39f;border-radius:4px;background:#d7d2cf"></div>
<div class="a" style="left:73px;top:868px;width:14px;height:13px;background:linear-gradient(180deg,#fdfdfb,#eeeceb);border-radius:3px 0 0 3px;border-right:1px solid #b8b3af"></div>
<svg class="a" style="left:77px;top:870px" width="6" height="9"><path d="M5 1 L1.5 4.5 L5 8" stroke="#b3aeaa" stroke-width="1.2" fill="none"/></svg>
<div class="a" style="left:87px;top:868px;width:30px;height:13px;background:linear-gradient(180deg,#a6c2e8,#8aaad8);border:1px solid #7c9fd0"></div>
<div class="a" style="left:97px;top:871px;width:1px;height:6px;background:#4d6e9e;box-shadow:3px 0 0 #4d6e9e,6px 0 0 #4d6e9e"></div>
<div class="a" style="left:149px;top:868px;width:14px;height:13px;background:linear-gradient(180deg,#fdfdfb,#eeeceb);border-radius:0 3px 3px 0;border-left:1px solid #b8b3af"></div>
<svg class="a" style="left:153px;top:870px" width="6" height="9"><path d="M1 1 L4.5 4.5 L1 8" stroke="#222" stroke-width="1.4" fill="none"/></svg>
<!-- bottom buttons -->
<svg class="a" style="left:77px;top:889px" width="17" height="17"><path d="M2 6 L15 6 L16 14 C16 15.5 15.5 16 14 16 L3 16 C1.5 16 1 15.5 1 14 Z" fill="#e4e4e2" stroke="#8a8a88" stroke-width="0.8"/><rect x="1.5" y="12.5" width="14" height="3" rx="1" fill="#3a3a3a"/><path d="M5.5 0.5 H11.5 V4.5 H14 L8.5 10 L3 4.5 H5.5 Z" fill="#b8e07a" stroke="#5ea020" stroke-width="1"/></svg>
<svg class="a" style="left:105px;top:889px" width="17" height="17"><path d="M6.5 0.5 H12 L16.5 5 V16.5 H6.5 Z" fill="#f4f4f2" stroke="#9a9a98"/><path d="M12 0.5 V5 H16.5" fill="#ddd" stroke="#9a9a98"/><path d="M1.5 16 C1 10 4 7 9.5 7 V4.5 L14.5 9 L9.5 13.5 V11 C6 11 4 12.5 3.5 16 Z" fill="#7aa8e0" stroke="#3e74c0" stroke-width="0.9"/></svg>
<svg class="a" style="left:133px;top:889px" width="17" height="17"><circle cx="8.5" cy="8.5" r="7" fill="#fff" stroke="#c02525" stroke-width="2.4"/><path d="M4 4 L13 13" stroke="#c02525" stroke-width="2.4"/></svg>
<svg class="a" style="left:161px;top:889px" width="17" height="17"><path d="M7 2 H15 V13 H7 V10 H12 V5 H7 V8 L3 4 L7 1Z" fill="#edd400" stroke="#c4a000" stroke-width="0.9"/><circle cx="4" cy="14" r="2.5" fill="#3465a4"/></svg>

<!-- ===== layers dock ===== -->
<div class="a" style="left:1007px;top:193px;width:200px;height:354px;background:#eff0ed;border:1px solid #a8a29e;border-radius:0 5px 5px 5px;box-shadow:inset 1px 1px 0 #fdfdfb"></div>
<div class="a tabi" style="left:1040px;top:164px;width:33px"></div>
<div class="a tabi" style="left:1072px;top:164px;width:31px"></div>
<div class="a tabi" style="left:1102px;top:164px;width:33px"></div>
<div class="a" style="left:1007px;top:161px;width:34px;height:34px;background:linear-gradient(180deg,#fdfdfb,#efefec);border:1px solid #b5aea8;border-bottom:none;border-radius:5px 5px 0 0"></div>
<div class="a" style="left:1007px;top:161px;width:34px;height:5px;background:linear-gradient(180deg,#5f8ccb,#9dbde6);border-radius:5px 5px 0 0"></div>
<svg class="a" style="left:1012px;top:168px" width="24" height="22"><g stroke="#a09c98" stroke-width="1.2" fill="#fbfbf9"><path d="M4 14 L21 14 L19 19.5 L1.5 19.5 Z"/><path d="M4 10 L21 10 L19 15.5 L1.5 15.5 Z"/><path d="M5 2 L22 2 L19.5 11 L1.5 11 Z" fill="#e6e6e4"/></g></svg>
<svg class="a" style="left:1043px;top:168px" width="25" height="23"><path d="M3 16 L22 16 L20 21.5 L1 21.5 Z" fill="#3465a4" stroke="#204a87"/><path d="M3 12 L22 12 L20 18 L1 18 Z" fill="#73d216" stroke="#4e9a06"/><path d="M5 1 L23 1 L19 12.5 L1 12.5 Z" fill="#ef2929" stroke="#a40000"/></svg>
<svg class="a" style="left:1075px;top:168px" width="24" height="24"><path d="M3 11 L13 1 M2 18 C5 9 8 2 10 3 C14 5 14 11 19 10 C21 9 21 3 22 1 M7 21 C9 15 12 14 14 15 C16 16 16 20 18 21 M8 10 L18 20" stroke="#3465a4" stroke-width="0.9" fill="none"/><path d="M3 11 L13 1 M8 10 L18 20" stroke="#222" stroke-width="1" fill="none"/><g fill="#fff" stroke="#111" stroke-width="1"><rect x="5" y="4" width="3" height="3"/><rect x="16.5" y="8.5" width="3" height="3"/><rect x="11.5" y="14.5" width="3" height="3"/></g><g fill="#111"><circle cx="2.5" cy="11.5" r="1.3"/><circle cx="13" cy="1.5" r="1.3"/><circle cx="8" cy="10" r="1.3"/><circle cx="18.5" cy="20.5" r="1.3"/><circle cx="21" cy="6" r="1.1"/><circle cx="14" cy="12" r="1.1"/></g></svg>
<svg class="a" style="left:1106px;top:167px" width="26" height="22"><path d="M11 3 L5 9 L11 13 V10 C16 10 18 12 18 15 C18 17 16 19 14 19 C19 19 22 17 22 13 C22 9 18 6 11 6Z" fill="#f3eba0" stroke="#e0d480" opacity="0.9" transform="translate(3 -1)"/><path d="M9 3 L2 9 L9 14 V10.5 C13 10.5 15 12 15 15 C15 17 13 19 11 20 C17 20 19 17 19 14 C19 9 15 6.5 9 6.5Z" fill="#edd400" stroke="#c4a000"/></svg>
<div class="a arrbox" style="left:1189px;top:171px"></div>
<div class="a lbl dis" style="left:1012px;top:205px">Mode :</div>
<div class="a" style="left:1084px;top:199px;width:117px;height:27px;border:1px solid #b3ada8;border-radius:4px;background:linear-gradient(180deg,#f7f7f5,#e9e9e6)"></div>
<div class="a" style="left:1180px;top:203px;width:1px;height:19px;background:#c9c4c0"></div>
<svg class="a" style="left:1185px;top:205px" width="10" height="14"><path d="M2 5 L5 2 L8 5 M2 9 L5 12 L8 9" stroke="#b8b2ae" stroke-width="1.1" fill="none"/></svg>
<div class="a lbl dis" style="left:1090px;top:205px">Normal</div>
<div class="a" style="left:1012px;top:229px;width:190px;height:34px;border:1px solid #b3ada8;background:#efefec"></div>
<div class="a" style="left:1013px;top:231px;width:174px;height:30px;background:#c9dbf0;border-bottom:1px solid #a9c3e8"></div>
<div class="a lbl dis" style="left:1014px;top:238px">Opacité</div>
<div class="a lbl" style="left:1155px;top:238px;font-size:12.5px">100,0</div>
<svg class="a" style="left:1189px;top:234px" width="10" height="24"><path d="M2 6 L5 3 L8 6 M2 18 L5 21 L8 18" stroke="#c7c2be" stroke-width="1" fill="none"/></svg>
<div class="a lbl dis" style="left:1012px;top:271px">Verrouiller :</div>
<svg class="a" style="left:1087px;top:269px" width="17" height="17"><path d="M9 9 L14.5 2.5 L16 4 L10.5 10.5 Z" fill="#d4cfcb" stroke="#bdb8b4" stroke-width="0.8"/><path d="M8 8.5 L11 11.5 L9.5 13 L6.5 10 Z" fill="#c4bfbb"/><path d="M6.5 10 L9.5 13 C7.5 15 5 15.5 2 16 C3 13.5 4.5 11.5 6.5 10Z" fill="#b5b0ac"/></svg>
<div class="a" style="left:1116px;top:270px;width:16px;height:16px;background:conic-gradient(#c8c4c0 25%,#e2dfdc 0 50%,#c8c4c0 0 75%,#e2dfdc 0);background-size:8px 8px"></div>
<div class="a" style="left:1012px;top:293px;width:190px;height:221px;border:1px solid #aca6a1;background:#fdfdfb"></div>
<!-- layer buttons (disabled) -->
<svg class="a" style="left:1016px;top:520px" width="180" height="18"><g stroke="#cdc8c4" fill="#ecebe9" stroke-width="1"><path d="M2 1 H9 L13 5 V16 H2 Z"/><path d="M9 9 H12 V12 H15 V15 H12 V17 H9 V15 H6 V12 H9 Z" fill="#e2e0dd"/><path d="M28 4 H34 L36 6 H43 V16 H28 Z"/><path d="M28 9 H43" /><path d="M55 11 L61 5 L67 11" stroke-width="2.5" fill="none"/><path d="M82 6 L88 12 L94 6" stroke-width="2.5" fill="none"/><rect x="109" y="2" width="11" height="9"/><rect x="112" y="6" width="11" height="9"/><path d="M142 3 V14 M138 6 H146 M135 10 C135 15 149 15 149 10" stroke-width="2" fill="none"/><circle cx="142" cy="3" r="2" fill="none" stroke-width="1.5"/><circle cx="171" cy="9" r="7" stroke-width="2.5" fill="none"/><path d="M166 4 L176 14" stroke-width="2.5"/></g></svg>
<!-- handles -->
<div class="a" style="left:1002px;top:514px;width:5px;height:48px;background-image:radial-gradient(circle,#b8a8a8 0.7px,transparent 1px);background-size:3px 3px"></div>
<div class="a" style="left:1083px;top:548px;width:48px;height:6px;background-image:radial-gradient(circle,#b8a8a8 0.8px,transparent 1.1px);background-size:3px 3px"></div>

<!-- ===== brushes dock (4) ===== -->
<div class="a" style="left:1007px;top:583px;width:200px;height:332px;background:#eff0ed;border:1px solid #a8a29e;border-radius:0 5px 5px 5px;box-shadow:inset 1px 1px 0 #fdfdfb"></div>
<div class="a tabi" style="left:1038px;top:556px;width:31px;height:29px"></div>
<div class="a tabi" style="left:1068px;top:556px;width:31px;height:29px"></div>
<div class="a" style="left:1007px;top:553px;width:32px;height:32px;background:linear-gradient(180deg,#fdfdfb,#efefec);border:1px solid #b5aea8;border-bottom:none;border-radius:5px 5px 0 0"></div>
<div class="a" style="left:1007px;top:553px;width:32px;height:5px;background:linear-gradient(180deg,#5f8ccb,#9dbde6);border-radius:5px 5px 0 0"></div>
<div class="a" style="left:1012px;top:558px;width:23px;height:22px;border:1.5px solid #000;background:radial-gradient(circle at 10px 10px,#000 0,#111 1.5px,rgba(0,0,0,0.55) 4px,rgba(0,0,0,0) 8px),#fff"></div>
<div class="a" style="left:1027px;top:572px;width:7px;height:7px;background:#9fb4ef"></div>
<div class="a" style="left:1027px;top:575px;width:7px;height:1.5px;background:#000"></div><div class="a" style="left:1029.8px;top:572px;width:1.5px;height:7px;background:#000"></div>
<div class="a" style="left:1042px;top:560px;width:22px;height:22px;border:1.5px solid #000;background:linear-gradient(90deg,#f39a35 0,#f7a840 3px,#ffd070 4px,#f5a03a 6px,#f09030 9px,#fcc060 11px,#f8b050 12px,#f39a35 14px,#ffcf70 16px,#f5a440 17px,#f09535 19px)"></div>
<div class="a" style="left:1072px;top:560px;width:22px;height:22px;border:1.5px solid #000;background:linear-gradient(90deg,#000,#fff)"></div>
<div class="a arrbox" style="left:1189px;top:562px"></div>
<div class="a" style="left:1013px;top:589px;width:188px;height:23px;border:1px solid #a5a09c;border-radius:4px;background:#fdfdfb"></div>
<div class="a lbl" style="left:1018px;top:593px;font-style:italic;color:#b3aba4">filtre</div>
<svg class="a" style="left:1184px;top:596px" width="10" height="7"><path d="M1 1 L5 5 L9 1" stroke="#222" stroke-width="1.5" fill="none"/></svg>
<div class="a lbl" style="left:1013px;top:615px;font-style:italic">2. Hardness 050 (51 × 51)</div>
<div class="a" style="left:1012px;top:632px;width:172px;height:187px;border:1px solid #aca6a1;background:#fdfdfb;overflow:hidden" id="bgrid"></div>
<!--BG--><svg class="a" style="left:1013px;top:633px" width="170" height="185" viewBox="1013 633 170 185"><defs>
<filter id="bl1" x="-50%" y="-100%" width="200%" height="300%"><feGaussianBlur stdDeviation="1.6"/></filter>
<radialGradient id="soft1"><stop offset="0" stop-color="#000"/><stop offset="0.12" stop-color="#000" stop-opacity="0.9"/><stop offset="0.45" stop-color="#000" stop-opacity="0.4"/><stop offset="0.8" stop-color="#000" stop-opacity="0.08"/><stop offset="1" stop-color="#000" stop-opacity="0"/></radialGradient>
<radialGradient id="soft2"><stop offset="0" stop-color="#000"/><stop offset="0.35" stop-color="#000" stop-opacity="0.95"/><stop offset="0.7" stop-color="#000" stop-opacity="0.45"/><stop offset="1" stop-color="#000" stop-opacity="0"/></radialGradient>
<radialGradient id="soft3"><stop offset="0" stop-color="#000" stop-opacity="0.6"/><stop offset="0.6" stop-color="#000" stop-opacity="0.25"/><stop offset="1" stop-color="#000" stop-opacity="0"/></radialGradient>
<linearGradient id="dk" x1="0" y1="0" x2="0" y2="1"><stop offset="0" stop-color="#000"/><stop offset="0.5" stop-color="#111"/><stop offset="1" stop-color="#ccc"/></linearGradient>
</defs><rect x="1062.8" y="648.6" width="2" height="2" fill="#000"/><rect x="1084" y="645" width="30" height="7" fill="#000"/><ellipse cx="1132" cy="648.5" rx="12" ry="3.6" fill="#000" filter="url(#bl1)"/><rect x="1152" y="648" width="29" height="1.2" fill="#000"/><circle cx="1029.1" cy="683.3" r="12" fill="url(#soft1)"/><circle cx="1063.8" cy="683.3" r="13.5" fill="url(#soft1)"/><circle cx="1098.0" cy="683.3" r="14" fill="url(#soft2)"/><circle cx="1132.4" cy="683.2" r="15.5" fill="#000"/><polygon points="1166.0,669.5 1169.7,679.4 1180.3,679.9 1172.0,686.4 1174.8,696.6 1166.0,690.8 1157.2,696.6 1160.0,686.4 1151.7,679.9 1162.3,679.4" fill="#000"/><rect x="1047.5" y="666.5" width="33" height="33" fill="none" stroke="#000" stroke-width="1.2"/><circle cx="1132.2" cy="717.5" r="11" fill="url(#soft3)"/><rect x="1020" y="739" width="2" height="7" fill="#888" transform="rotate(-30 1021 742)"/><circle cx="1055.8" cy="742.7" r="2.5" fill="#333"/><circle cx="1067.8" cy="748.7" r="2.0" fill="#333"/><circle cx="1053.8" cy="756.7" r="2.5" fill="#333"/><circle cx="1063.8" cy="760.7" r="2.5" fill="#333"/><circle cx="1060.8" cy="754.7" r="1.8" fill="#333"/><circle cx="1069.8" cy="756.7" r="1.8" fill="#333"/><circle cx="1071.8" cy="745.7" r="1.5" fill="#333"/><circle cx="1057.8" cy="749.7" r="1.5" fill="#333"/><circle cx="1090.8" cy="745.9" r="2.0" fill="#222"/><circle cx="1104.1" cy="747.8" r="1.2" fill="#222"/><circle cx="1096.2" cy="747.1" r="2.3" fill="#222"/><circle cx="1091.9" cy="743.4" r="2.0" fill="#222"/><circle cx="1096.4" cy="762.1" r="1.2" fill="#222"/><circle cx="1102.9" cy="750.0" r="1.5" fill="#222"/><circle cx="1100.1" cy="751.6" r="1.5" fill="#222"/><circle cx="1105.6" cy="758.7" r="2.0" fill="#222"/><circle cx="1098.2" cy="747.7" r="1.2" fill="#222"/><circle cx="1098.5" cy="757.7" r="1.5" fill="#222"/><circle cx="1098.3" cy="743.7" r="1.5" fill="#222"/><circle cx="1096.4" cy="755.6" r="1.2" fill="#222"/><circle cx="1091.8" cy="750.9" r="1.5" fill="#222"/><circle cx="1101.9" cy="742.1" r="2.3" fill="#222"/><circle cx="1088.1" cy="756.2" r="2.0" fill="#222"/><circle cx="1094.0" cy="746.1" r="2.0" fill="#222"/><circle cx="1091.3" cy="749.3" r="2.3" fill="#222"/><circle cx="1087.7" cy="741.7" r="1.2" fill="#222"/><circle cx="1099.0" cy="763.5" r="1.2" fill="#222"/><circle cx="1095.2" cy="756.0" r="2.0" fill="#222"/><circle cx="1090.7" cy="755.8" r="2.3" fill="#222"/><circle cx="1099.5" cy="750.4" r="1.2" fill="#222"/><rect x="1122.2" y="740.7" width="1.2" height="1.2" fill="#111"/><rect x="1124.7" y="745.7" width="1.2" height="1.2" fill="#111"/><rect x="1122.2" y="750.7" width="1.2" height="1.2" fill="#111"/><rect x="1124.7" y="755.7" width="1.2" height="1.2" fill="#111"/><rect x="1122.2" y="760.7" width="1.2" height="1.2" fill="#111"/><rect x="1127.2" y="740.7" width="1.2" height="1.2" fill="#111"/><rect x="1129.7" y="745.7" width="1.2" height="1.2" fill="#111"/><rect x="1127.2" y="750.7" width="1.2" height="1.2" fill="#111"/><rect x="1129.7" y="755.7" width="1.2" height="1.2" fill="#111"/><rect x="1127.2" y="760.7" width="1.2" height="1.2" fill="#111"/><rect x="1132.2" y="740.7" width="1.2" height="1.2" fill="#111"/><rect x="1134.7" y="745.7" width="1.2" height="1.2" fill="#111"/><rect x="1132.2" y="750.7" width="1.2" height="1.2" fill="#111"/><rect x="1134.7" y="755.7" width="1.2" height="1.2" fill="#111"/><rect x="1132.2" y="760.7" width="1.2" height="1.2" fill="#111"/><rect x="1137.2" y="740.7" width="1.2" height="1.2" fill="#111"/><rect x="1139.7" y="745.7" width="1.2" height="1.2" fill="#111"/><rect x="1137.2" y="750.7" width="1.2" height="1.2" fill="#111"/><rect x="1139.7" y="755.7" width="1.2" height="1.2" fill="#111"/><rect x="1137.2" y="760.7" width="1.2" height="1.2" fill="#111"/><rect x="1142.2" y="740.7" width="1.2" height="1.2" fill="#111"/><rect x="1144.7" y="745.7" width="1.2" height="1.2" fill="#111"/><rect x="1142.2" y="750.7" width="1.2" height="1.2" fill="#111"/><rect x="1144.7" y="755.7" width="1.2" height="1.2" fill="#111"/><rect x="1142.2" y="760.7" width="1.2" height="1.2" fill="#111"/><circle cx="1019.3" cy="789.4" r="3.0" fill="none" stroke="#000" stroke-width="0.9"/><circle cx="1036.2" cy="781.3" r="2.1" fill="none" stroke="#000" stroke-width="0.9"/><circle cx="1033.8" cy="795.8" r="2.9" fill="none" stroke="#000" stroke-width="0.9"/><circle cx="1024.9" cy="791.2" r="3.0" fill="none" stroke="#000" stroke-width="0.9"/><circle cx="1026.7" cy="775.7" r="3.1" fill="none" stroke="#000" stroke-width="0.9"/><circle cx="1037.3" cy="784.3" r="2.3" fill="none" stroke="#000" stroke-width="0.9"/><circle cx="1028.3" cy="778.0" r="2.7" fill="none" stroke="#000" stroke-width="0.9"/><circle cx="1032.4" cy="774.6" r="2.9" fill="none" stroke="#000" stroke-width="0.9"/><circle cx="1036.4" cy="793.2" r="2.0" fill="none" stroke="#000" stroke-width="0.9"/><circle cx="1022.4" cy="790.5" r="2.9" fill="none" stroke="#000" stroke-width="0.9"/><circle cx="1038.8" cy="785.9" r="2.5" fill="none" stroke="#000" stroke-width="0.9"/><circle cx="1031.9" cy="797.0" r="2.1" fill="none" stroke="#000" stroke-width="0.9"/><circle cx="1021.2" cy="778.8" r="2.9" fill="none" stroke="#000" stroke-width="0.9"/><circle cx="1017.9" cy="784.6" r="2.9" fill="none" stroke="#000" stroke-width="0.9"/><circle cx="1039.9" cy="790.4" r="2.0" fill="none" stroke="#000" stroke-width="0.9"/><circle cx="1029.6" cy="797.5" r="2.2" fill="none" stroke="#000" stroke-width="0.9"/><circle cx="1018.6" cy="785.9" r="2.5" fill="none" stroke="#000" stroke-width="0.9"/><circle cx="1027.2" cy="790.8" r="3.0" fill="none" stroke="#000" stroke-width="0.9"/><circle cx="1025.1" cy="784.9" r="3.2" fill="none" stroke="#000" stroke-width="0.9"/><circle cx="1028.3" cy="797.3" r="2.8" fill="none" stroke="#000" stroke-width="0.9"/><circle cx="1019.9" cy="789.3" r="2.4" fill="none" stroke="#000" stroke-width="0.9"/><circle cx="1027.9" cy="780.6" r="2.7" fill="none" stroke="#000" stroke-width="0.9"/><circle cx="1022.8" cy="781.7" r="3.1" fill="none" stroke="#000" stroke-width="0.9"/><circle cx="1028.8" cy="781.0" r="3.0" fill="none" stroke="#000" stroke-width="0.9"/><circle cx="1025.8" cy="796.3" r="3.2" fill="none" stroke="#000" stroke-width="0.9"/><circle cx="1033.7" cy="791.9" r="2.1" fill="none" stroke="#000" stroke-width="0.9"/><circle cx="1034.0" cy="777.4" r="2.2" fill="none" stroke="#000" stroke-width="0.9"/><circle cx="1035.6" cy="782.4" r="2.2" fill="none" stroke="#000" stroke-width="0.9"/><circle cx="1040.4" cy="784.6" r="2.2" fill="none" stroke="#000" stroke-width="0.9"/><circle cx="1039.9" cy="779.7" r="3.0" fill="none" stroke="#000" stroke-width="0.9"/><circle cx="1020.4" cy="785.2" r="2.2" fill="none" stroke="#000" stroke-width="0.9"/><circle cx="1022.2" cy="776.5" r="2.9" fill="none" stroke="#000" stroke-width="0.9"/><circle cx="1028.7" cy="795.7" r="2.9" fill="none" stroke="#000" stroke-width="0.9"/><circle cx="1034.2" cy="796.7" r="2.1" fill="none" stroke="#000" stroke-width="0.9"/><circle cx="1034.7" cy="790.0" r="2.6" fill="none" stroke="#000" stroke-width="0.9"/><circle cx="1019.9" cy="779.0" r="3.0" fill="none" stroke="#000" stroke-width="0.9"/><circle cx="1031.9" cy="776.3" r="2.8" fill="none" stroke="#000" stroke-width="0.9"/><circle cx="1039.4" cy="789.4" r="2.7" fill="none" stroke="#000" stroke-width="0.9"/><circle cx="1093.0" cy="778.3" r="2.0" fill="none" stroke="#000" stroke-width="0.9"/><circle cx="1087.8" cy="781.4" r="2.1" fill="none" stroke="#000" stroke-width="0.9"/><circle cx="1090.3" cy="777.8" r="2.2" fill="none" stroke="#000" stroke-width="0.9"/><circle cx="1089.2" cy="786.5" r="3.0" fill="none" stroke="#000" stroke-width="0.9"/><circle cx="1087.4" cy="789.0" r="2.4" fill="none" stroke="#000" stroke-width="0.9"/><circle cx="1108.5" cy="785.3" r="2.5" fill="none" stroke="#000" stroke-width="0.9"/><circle cx="1100.0" cy="775.5" r="2.7" fill="none" stroke="#000" stroke-width="0.9"/><circle cx="1095.4" cy="775.9" r="3.1" fill="none" stroke="#000" stroke-width="0.9"/><circle cx="1103.6" cy="778.4" r="2.9" fill="none" stroke="#000" stroke-width="0.9"/><circle cx="1095.2" cy="791.5" r="2.7" fill="none" stroke="#000" stroke-width="0.9"/><circle cx="1099.1" cy="796.4" r="2.1" fill="none" stroke="#000" stroke-width="0.9"/><circle cx="1091.3" cy="792.0" r="2.8" fill="none" stroke="#000" stroke-width="0.9"/><circle cx="1094.7" cy="791.2" r="2.8" fill="none" stroke="#000" stroke-width="0.9"/><circle cx="1105.8" cy="777.1" r="2.6" fill="none" stroke="#000" stroke-width="0.9"/><circle cx="1095.4" cy="794.7" r="3.1" fill="none" stroke="#000" stroke-width="0.9"/><circle cx="1096.0" cy="785.2" r="2.4" fill="none" stroke="#000" stroke-width="0.9"/><circle cx="1093.6" cy="785.5" r="3.1" fill="none" stroke="#000" stroke-width="0.9"/><circle cx="1090.0" cy="790.3" r="2.2" fill="none" stroke="#000" stroke-width="0.9"/><circle cx="1095.6" cy="788.4" r="2.8" fill="none" stroke="#000" stroke-width="0.9"/><circle cx="1099.0" cy="784.3" r="2.1" fill="none" stroke="#000" stroke-width="0.9"/><circle cx="1100.7" cy="792.0" r="3.0" fill="none" stroke="#000" stroke-width="0.9"/><circle cx="1105.9" cy="777.2" r="2.6" fill="none" stroke="#000" stroke-width="0.9"/><circle cx="1104.2" cy="795.4" r="2.8" fill="none" stroke="#000" stroke-width="0.9"/><circle cx="1091.7" cy="784.2" r="2.2" fill="none" stroke="#000" stroke-width="0.9"/><circle cx="1090.4" cy="788.4" r="2.2" fill="none" stroke="#000" stroke-width="0.9"/><circle cx="1096.6" cy="790.1" r="2.4" fill="none" stroke="#000" stroke-width="0.9"/><circle cx="1098.5" cy="793.2" r="2.9" fill="none" stroke="#000" stroke-width="0.9"/><circle cx="1088.8" cy="784.2" r="2.5" fill="none" stroke="#000" stroke-width="0.9"/><circle cx="1097.9" cy="782.2" r="2.9" fill="none" stroke="#000" stroke-width="0.9"/><circle cx="1089.0" cy="782.7" r="3.0" fill="none" stroke="#000" stroke-width="0.9"/><circle cx="1089.5" cy="782.0" r="2.2" fill="none" stroke="#000" stroke-width="0.9"/><circle cx="1092.7" cy="795.7" r="2.0" fill="none" stroke="#000" stroke-width="0.9"/><circle cx="1102.2" cy="788.8" r="3.1" fill="none" stroke="#000" stroke-width="0.9"/><circle cx="1087.7" cy="791.4" r="2.3" fill="none" stroke="#000" stroke-width="0.9"/><circle cx="1107.8" cy="789.4" r="2.3" fill="none" stroke="#000" stroke-width="0.9"/><circle cx="1103.0" cy="790.9" r="2.8" fill="none" stroke="#000" stroke-width="0.9"/><circle cx="1105.2" cy="782.2" r="2.8" fill="none" stroke="#000" stroke-width="0.9"/><circle cx="1104.4" cy="787.7" r="2.9" fill="none" stroke="#000" stroke-width="0.9"/><circle cx="1132.2" cy="785.9" r="14.5" fill="url(#dk)"/><path d="M1057 806 L1062 815 M1070 812 L1066 818" stroke="#666" stroke-width="2"/><rect x="1110.1" y="661.2" width="4" height="4" fill="#9fb4ef"/><path d="M1107.1 662.7h6M1110.1 659.7v6" stroke="#000" stroke-width="1.3"/><rect x="1144.3" y="661.2" width="4" height="4" fill="#9fb4ef"/><path d="M1141.3 662.7h6M1144.3 659.7v6" stroke="#000" stroke-width="1.3"/><rect x="1178.5" y="661.2" width="4" height="4" fill="#9fb4ef"/><path d="M1175.5 662.7h6M1178.5 659.7v6" stroke="#000" stroke-width="1.3"/><path d="M1079 659 L1079 665 L1073 665 Z" fill="#8ea6f0"/><rect x="1041.7" y="695.4" width="4" height="4" fill="#9fb4ef"/><path d="M1038.7 696.9h6M1041.7 693.9v6" stroke="#000" stroke-width="1.3"/><rect x="1075.9" y="695.4" width="4" height="4" fill="#9fb4ef"/><path d="M1072.9 696.9h6M1075.9 693.9v6" stroke="#000" stroke-width="1.3"/><rect x="1110.1" y="695.4" width="4" height="4" fill="#9fb4ef"/><path d="M1107.1 696.9h6M1110.1 693.9v6" stroke="#000" stroke-width="1.3"/><rect x="1144.3" y="695.4" width="4" height="4" fill="#9fb4ef"/><path d="M1141.3 696.9h6M1144.3 693.9v6" stroke="#000" stroke-width="1.3"/><rect x="1178.5" y="695.4" width="4" height="4" fill="#9fb4ef"/><path d="M1175.5 696.9h6M1178.5 693.9v6" stroke="#000" stroke-width="1.3"/><rect x="1041.7" y="729.6" width="4" height="4" fill="#f28a8a"/><path d="M1038.7 731.1h6M1041.7 728.1v6" stroke="#000" stroke-width="1.3"/><rect x="1075.9" y="729.6" width="4" height="4" fill="#f28a8a"/><path d="M1072.9 731.1h6M1075.9 728.1v6" stroke="#000" stroke-width="1.3"/><rect x="1110.1" y="729.6" width="4" height="4" fill="#f28a8a"/><path d="M1107.1 731.1h6M1110.1 728.1v6" stroke="#000" stroke-width="1.3"/><rect x="1144.3" y="729.6" width="4" height="4" fill="#f28a8a"/><path d="M1141.3 731.1h6M1144.3 728.1v6" stroke="#000" stroke-width="1.3"/><rect x="1178.5" y="729.6" width="4" height="4" fill="#f28a8a"/><path d="M1175.5 731.1h6M1178.5 728.1v6" stroke="#000" stroke-width="1.3"/><path d="M1045 761 L1045 767 L1039 767 Z" fill="#f07a7a"/><path d="M1072.9 765.3h6M1075.9 762.3v6" stroke="#000" stroke-width="1.3"/><path d="M1107.1 765.3h6M1110.1 762.3v6" stroke="#000" stroke-width="1.3"/><path d="M1175.5 765.3h6M1178.5 762.3v6" stroke="#000" stroke-width="1.3"/><path d="M1141.3 765.3h6M1144.3 762.3v6" stroke="#000" stroke-width="1.3"/><rect x="1075.9" y="798.0" width="4" height="4" fill="#f28a8a"/><path d="M1072.9 799.5h6M1075.9 796.5v6" stroke="#000" stroke-width="1.3"/><rect x="1110.1" y="798.0" width="4" height="4" fill="#f28a8a"/><path d="M1107.1 799.5h6M1110.1 796.5v6" stroke="#000" stroke-width="1.3"/><rect x="1144.3" y="798.0" width="4" height="4" fill="#f28a8a"/><path d="M1141.3 799.5h6M1144.3 796.5v6" stroke="#000" stroke-width="1.3"/><path d="M1038.7 799.5h6M1041.7 796.5v6" stroke="#000" stroke-width="1.3"/><path d="M1175.5 799.5h6M1178.5 796.5v6" stroke="#000" stroke-width="1.3"/><path d="M1018 819h1v1h-1zM1019 818h1v1h-1zM1020 711h1v1h-1zM1020 717h1v1h-1zM1021 713h1v1h-1zM1021 717h1v1h-1zM1021 719h2v2h-2zM1021 818h2v2h-2zM1021 819h1v1h-1zM1021 820h2v2h-2zM1021 821h1v1h-1zM1022 714h1v1h-1zM1022 723h1v1h-1zM1022 724h1v1h-1zM1022 819h1v1h-1zM1023 713h1v1h-1zM1023 723h1v1h-1zM1024 714h2v2h-2zM1024 717h1v1h-1zM1024 718h1v1h-1zM1024 815h2v2h-2zM1024 817h1v1h-1zM1024 824h1v1h-1zM1025 723h1v1h-1zM1025 821h2v2h-2zM1026 714h1v1h-1zM1026 716h2v2h-2zM1026 717h1v1h-1zM1026 717h2v2h-2zM1026 718h1v1h-1zM1026 719h1v1h-1zM1026 722h1v1h-1zM1026 817h1v1h-1zM1027 713h2v2h-2zM1027 714h1v1h-1zM1027 714h2v2h-2zM1027 715h1v1h-1zM1027 716h2v2h-2zM1027 717h1v1h-1zM1027 718h1v1h-1zM1027 719h1v1h-1zM1027 720h1v1h-1zM1028 717h1v1h-1zM1028 717h2v2h-2zM1028 718h1v1h-1zM1028 720h1v1h-1zM1028 721h1v1h-1zM1028 821h1v1h-1zM1028 825h1v1h-1zM1029 712h2v2h-2zM1029 715h1v1h-1zM1029 716h1v1h-1zM1029 716h2v2h-2zM1029 717h1v1h-1zM1029 717h2v2h-2zM1029 718h1v1h-1zM1029 718h2v2h-2zM1029 719h2v2h-2zM1029 720h2v2h-2zM1029 721h1v1h-1zM1029 723h1v1h-1zM1030 712h1v1h-1zM1030 714h1v1h-1zM1030 715h1v1h-1zM1030 716h1v1h-1zM1030 717h1v1h-1zM1030 718h1v1h-1zM1030 723h1v1h-1zM1030 823h1v1h-1zM1030 825h1v1h-1zM1031 716h2v2h-2zM1031 717h1v1h-1zM1031 718h1v1h-1zM1031 719h1v1h-1zM1031 822h1v1h-1zM1031 823h1v1h-1zM1031 825h1v1h-1zM1032 712h1v1h-1zM1032 713h1v1h-1zM1032 714h1v1h-1zM1032 717h1v1h-1zM1032 718h1v1h-1zM1032 719h1v1h-1zM1032 720h1v1h-1zM1032 818h1v1h-1zM1032 822h1v1h-1zM1033 711h1v1h-1zM1033 716h1v1h-1zM1033 717h1v1h-1zM1033 718h1v1h-1zM1033 816h1v1h-1zM1033 816h2v2h-2zM1033 817h1v1h-1zM1033 821h1v1h-1zM1033 825h2v2h-2zM1034 713h1v1h-1zM1034 714h1v1h-1zM1034 716h1v1h-1zM1034 717h1v1h-1zM1034 718h1v1h-1zM1034 817h1v1h-1zM1034 820h1v1h-1zM1034 822h1v1h-1zM1035 713h1v1h-1zM1035 718h1v1h-1zM1035 719h2v2h-2zM1035 720h1v1h-1zM1035 817h1v1h-1zM1036 714h1v1h-1zM1036 824h1v1h-1zM1037 817h1v1h-1zM1037 819h1v1h-1zM1039 717h1v1h-1zM1039 818h2v2h-2zM1052 786h1v1h-1zM1053 786h1v1h-1zM1054 787h2v2h-2zM1054 788h1v1h-1zM1055 778h1v1h-1zM1055 782h1v1h-1zM1056 716h1v1h-1zM1056 716h2v2h-2zM1056 785h1v1h-1zM1057 713h1v1h-1zM1057 780h1v1h-1zM1057 785h1v1h-1zM1057 786h1v1h-1zM1058 712h1v1h-1zM1058 786h2v2h-2zM1059 714h1v1h-1zM1059 716h1v1h-1zM1059 720h1v1h-1zM1059 778h2v2h-2zM1059 779h2v2h-2zM1059 783h1v1h-1zM1059 785h1v1h-1zM1059 786h1v1h-1zM1059 786h2v2h-2zM1059 787h1v1h-1zM1059 787h2v2h-2zM1059 789h1v1h-1zM1060 715h1v1h-1zM1060 716h1v1h-1zM1060 719h1v1h-1zM1060 778h1v1h-1zM1060 778h2v2h-2zM1060 783h1v1h-1zM1061 713h1v1h-1zM1061 716h1v1h-1zM1061 717h1v1h-1zM1061 721h2v2h-2zM1061 723h2v2h-2zM1061 782h1v1h-1zM1061 785h1v1h-1zM1061 789h1v1h-1zM1062 713h1v1h-1zM1062 716h1v1h-1zM1062 717h1v1h-1zM1062 718h2v2h-2zM1062 719h1v1h-1zM1062 780h1v1h-1zM1062 782h1v1h-1zM1062 783h1v1h-1zM1062 784h1v1h-1zM1062 784h2v2h-2zM1062 785h1v1h-1zM1062 785h2v2h-2zM1062 788h1v1h-1zM1062 789h1v1h-1zM1062 789h2v2h-2zM1062 791h1v1h-1zM1063 714h1v1h-1zM1063 715h1v1h-1zM1063 717h1v1h-1zM1063 717h2v2h-2zM1063 718h1v1h-1zM1063 719h1v1h-1zM1063 783h1v1h-1zM1063 783h2v2h-2zM1063 784h1v1h-1zM1063 785h1v1h-1zM1063 786h1v1h-1zM1063 788h1v1h-1zM1063 789h1v1h-1zM1064 715h1v1h-1zM1064 717h1v1h-1zM1064 718h1v1h-1zM1064 719h1v1h-1zM1064 720h1v1h-1zM1064 722h1v1h-1zM1064 780h1v1h-1zM1064 782h1v1h-1zM1064 784h1v1h-1zM1064 784h2v2h-2zM1064 785h1v1h-1zM1064 786h1v1h-1zM1064 786h2v2h-2zM1064 789h1v1h-1zM1064 791h1v1h-1zM1065 715h1v1h-1zM1065 715h2v2h-2zM1065 716h2v2h-2zM1065 717h1v1h-1zM1065 717h2v2h-2zM1065 718h1v1h-1zM1065 719h1v1h-1zM1065 780h1v1h-1zM1065 781h1v1h-1zM1065 783h1v1h-1zM1065 785h1v1h-1zM1065 785h2v2h-2zM1065 786h1v1h-1zM1065 786h2v2h-2zM1065 787h1v1h-1zM1065 793h1v1h-1zM1066 715h1v1h-1zM1066 782h1v1h-1zM1066 785h1v1h-1zM1066 786h2v2h-2zM1066 787h1v1h-1zM1066 791h1v1h-1zM1067 786h1v1h-1zM1067 787h1v1h-1zM1067 790h1v1h-1zM1067 791h1v1h-1zM1068 716h1v1h-1zM1068 719h1v1h-1zM1068 779h2v2h-2zM1068 786h2v2h-2zM1068 788h1v1h-1zM1068 788h2v2h-2zM1068 793h1v1h-1zM1069 786h2v2h-2zM1069 791h2v2h-2zM1070 715h1v1h-1zM1070 783h1v1h-1zM1070 784h1v1h-1zM1070 790h1v1h-1zM1070 795h1v1h-1zM1071 711h1v1h-1zM1071 782h1v1h-1zM1072 721h1v1h-1zM1072 781h1v1h-1zM1072 789h1v1h-1zM1074 715h1v1h-1zM1074 790h1v1h-1zM1075 780h1v1h-1zM1088 817h2v2h-2zM1092 724h2v2h-2zM1092 815h1v1h-1zM1093 716h1v1h-1zM1094 712h1v1h-1zM1094 713h1v1h-1zM1094 714h1v1h-1zM1094 819h1v1h-1zM1095 713h1v1h-1zM1095 717h2v2h-2zM1095 718h1v1h-1zM1095 721h1v1h-1zM1095 818h1v1h-1zM1095 820h2v2h-2zM1095 823h1v1h-1zM1096 713h2v2h-2zM1096 717h1v1h-1zM1096 718h1v1h-1zM1096 722h1v1h-1zM1096 816h1v1h-1zM1096 817h1v1h-1zM1096 819h1v1h-1zM1096 819h2v2h-2zM1096 820h1v1h-1zM1097 716h2v2h-2zM1097 717h1v1h-1zM1097 717h2v2h-2zM1097 718h1v1h-1zM1097 818h1v1h-1zM1097 820h2v2h-2zM1098 711h1v1h-1zM1098 713h1v1h-1zM1098 713h2v2h-2zM1098 716h1v1h-1zM1098 717h1v1h-1zM1098 718h1v1h-1zM1099 714h1v1h-1zM1099 716h1v1h-1zM1099 720h1v1h-1zM1099 721h1v1h-1zM1099 723h1v1h-1zM1099 819h1v1h-1zM1099 820h1v1h-1zM1099 824h2v2h-2zM1100 718h1v1h-1zM1100 723h1v1h-1zM1100 817h1v1h-1zM1101 711h1v1h-1zM1101 719h2v2h-2zM1101 720h1v1h-1zM1101 823h1v1h-1zM1102 717h2v2h-2zM1102 720h2v2h-2zM1104 819h1v1h-1zM1104 820h1v1h-1zM1119 785h1v1h-1zM1119 788h1v1h-1zM1119 789h1v1h-1zM1120 782h1v1h-1zM1120 785h1v1h-1zM1120 788h1v1h-1zM1120 820h1v1h-1zM1120 823h1v1h-1zM1121 814h2v2h-2zM1122 782h2v2h-2zM1123 783h1v1h-1zM1123 785h1v1h-1zM1123 795h2v2h-2zM1123 813h1v1h-1zM1123 814h1v1h-1zM1123 818h1v1h-1zM1123 819h1v1h-1zM1123 820h2v2h-2zM1124 775h1v1h-1zM1124 791h1v1h-1zM1124 816h1v1h-1zM1124 821h1v1h-1zM1124 822h1v1h-1zM1124 826h1v1h-1zM1125 776h1v1h-1zM1125 784h2v2h-2zM1125 817h1v1h-1zM1125 822h1v1h-1zM1125 823h1v1h-1zM1125 825h1v1h-1zM1126 782h2v2h-2zM1126 792h2v2h-2zM1126 797h1v1h-1zM1126 814h2v2h-2zM1126 815h1v1h-1zM1126 817h1v1h-1zM1126 821h2v2h-2zM1126 826h1v1h-1zM1127 786h1v1h-1zM1127 813h1v1h-1zM1128 773h2v2h-2zM1128 776h1v1h-1zM1128 777h1v1h-1zM1128 780h1v1h-1zM1128 796h1v1h-1zM1128 811h1v1h-1zM1128 815h2v2h-2zM1128 819h1v1h-1zM1128 820h2v2h-2zM1128 821h1v1h-1zM1129 811h1v1h-1zM1129 813h1v1h-1zM1129 814h1v1h-1zM1129 821h1v1h-1zM1129 824h1v1h-1zM1130 721h1v1h-1zM1130 774h1v1h-1zM1130 812h1v1h-1zM1130 814h2v2h-2zM1130 821h1v1h-1zM1130 823h2v2h-2zM1130 824h2v2h-2zM1130 827h1v1h-1zM1131 716h1v1h-1zM1131 718h1v1h-1zM1131 773h1v1h-1zM1131 779h1v1h-1zM1131 795h2v2h-2zM1131 798h2v2h-2zM1131 825h1v1h-1zM1131 828h1v1h-1zM1132 716h1v1h-1zM1132 777h1v1h-1zM1132 777h2v2h-2zM1132 779h1v1h-1zM1132 790h1v1h-1zM1132 813h1v1h-1zM1132 818h1v1h-1zM1132 821h2v2h-2zM1132 822h1v1h-1zM1132 823h1v1h-1zM1132 824h1v1h-1zM1133 713h2v2h-2zM1133 717h1v1h-1zM1133 774h2v2h-2zM1133 779h1v1h-1zM1133 788h1v1h-1zM1133 796h1v1h-1zM1133 811h2v2h-2zM1133 818h1v1h-1zM1133 822h1v1h-1zM1133 822h2v2h-2zM1133 827h2v2h-2zM1133 828h1v1h-1zM1134 789h2v2h-2zM1134 812h1v1h-1zM1134 823h1v1h-1zM1134 825h1v1h-1zM1135 774h1v1h-1zM1135 776h1v1h-1zM1135 782h1v1h-1zM1135 788h1v1h-1zM1135 798h1v1h-1zM1135 817h1v1h-1zM1135 821h1v1h-1zM1135 824h2v2h-2zM1135 828h1v1h-1zM1136 784h1v1h-1zM1136 812h1v1h-1zM1136 820h1v1h-1zM1136 821h1v1h-1zM1136 825h1v1h-1zM1136 828h1v1h-1zM1137 814h1v1h-1zM1137 817h1v1h-1zM1137 820h1v1h-1zM1137 824h1v1h-1zM1137 825h1v1h-1zM1137 828h1v1h-1zM1138 776h1v1h-1zM1138 783h1v1h-1zM1138 797h2v2h-2zM1138 818h1v1h-1zM1138 820h2v2h-2zM1139 784h1v1h-1zM1139 793h1v1h-1zM1139 815h2v2h-2zM1139 826h1v1h-1zM1139 827h2v2h-2zM1140 794h2v2h-2zM1140 796h1v1h-1zM1140 797h1v1h-1zM1140 819h1v1h-1zM1140 821h1v1h-1zM1141 786h1v1h-1zM1141 814h1v1h-1zM1141 814h2v2h-2zM1141 817h1v1h-1zM1142 791h1v1h-1zM1142 816h1v1h-1zM1143 777h1v1h-1zM1143 792h1v1h-1zM1143 817h1v1h-1zM1143 823h1v1h-1zM1144 779h1v1h-1zM1144 780h1v1h-1zM1144 788h1v1h-1zM1144 821h1v1h-1zM1144 823h1v1h-1zM1145 786h2v2h-2zM1154 784h1v1h-1zM1154 785h1v1h-1zM1154 787h1v1h-1zM1154 820h1v1h-1zM1155 714h1v1h-1zM1155 718h1v1h-1zM1155 752h1v1h-1zM1155 785h1v1h-1zM1155 789h1v1h-1zM1156 717h1v1h-1zM1156 720h1v1h-1zM1156 724h1v1h-1zM1156 755h1v1h-1zM1156 782h1v1h-1zM1156 785h1v1h-1zM1156 786h1v1h-1zM1156 788h1v1h-1zM1156 790h1v1h-1zM1156 790h2v2h-2zM1156 815h1v1h-1zM1156 825h1v1h-1zM1157 721h2v2h-2zM1157 748h1v1h-1zM1157 760h1v1h-1zM1157 781h1v1h-1zM1157 782h1v1h-1zM1157 787h1v1h-1zM1157 788h2v2h-2zM1157 789h2v2h-2zM1157 815h1v1h-1zM1157 818h2v2h-2zM1158 750h1v1h-1zM1158 782h1v1h-1zM1158 785h2v2h-2zM1158 791h2v2h-2zM1158 815h2v2h-2zM1158 819h1v1h-1zM1158 826h2v2h-2zM1159 719h1v1h-1zM1159 723h1v1h-1zM1159 750h1v1h-1zM1159 755h2v2h-2zM1159 779h1v1h-1zM1159 781h1v1h-1zM1159 788h1v1h-1zM1159 789h1v1h-1zM1159 791h1v1h-1zM1159 818h2v2h-2zM1160 718h1v1h-1zM1160 719h1v1h-1zM1160 726h1v1h-1zM1160 740h1v1h-1zM1160 755h2v2h-2zM1160 756h1v1h-1zM1160 757h1v1h-1zM1160 762h2v2h-2zM1160 782h2v2h-2zM1160 783h1v1h-1zM1160 788h2v2h-2zM1160 789h1v1h-1zM1160 789h2v2h-2zM1160 790h1v1h-1zM1160 815h1v1h-1zM1160 816h2v2h-2zM1160 817h1v1h-1zM1160 821h1v1h-1zM1161 712h1v1h-1zM1161 717h1v1h-1zM1161 718h1v1h-1zM1161 720h1v1h-1zM1161 721h1v1h-1zM1161 748h1v1h-1zM1161 759h1v1h-1zM1161 780h1v1h-1zM1161 781h1v1h-1zM1161 783h1v1h-1zM1161 787h1v1h-1zM1161 787h2v2h-2zM1161 788h1v1h-1zM1162 715h1v1h-1zM1162 715h2v2h-2zM1162 717h1v1h-1zM1162 719h2v2h-2zM1162 721h1v1h-1zM1162 722h1v1h-1zM1162 746h1v1h-1zM1162 748h1v1h-1zM1162 749h1v1h-1zM1162 750h1v1h-1zM1162 751h1v1h-1zM1162 755h1v1h-1zM1162 787h1v1h-1zM1162 789h1v1h-1zM1162 823h2v2h-2zM1162 824h1v1h-1zM1162 825h1v1h-1zM1163 709h1v1h-1zM1163 715h1v1h-1zM1163 719h2v2h-2zM1163 759h1v1h-1zM1163 782h1v1h-1zM1163 782h2v2h-2zM1163 783h2v2h-2zM1163 785h1v1h-1zM1163 786h1v1h-1zM1163 790h2v2h-2zM1163 792h1v1h-1zM1163 814h2v2h-2zM1163 826h1v1h-1zM1163 826h2v2h-2zM1164 710h1v1h-1zM1164 712h2v2h-2zM1164 717h1v1h-1zM1164 719h1v1h-1zM1164 723h1v1h-1zM1164 724h1v1h-1zM1164 740h1v1h-1zM1164 742h1v1h-1zM1164 746h1v1h-1zM1164 749h1v1h-1zM1164 750h1v1h-1zM1164 750h2v2h-2zM1164 752h1v1h-1zM1164 753h1v1h-1zM1164 754h1v1h-1zM1164 756h2v2h-2zM1164 780h1v1h-1zM1164 784h1v1h-1zM1164 787h1v1h-1zM1164 790h1v1h-1zM1164 791h1v1h-1zM1164 817h1v1h-1zM1164 820h1v1h-1zM1165 712h1v1h-1zM1165 715h1v1h-1zM1165 716h1v1h-1zM1165 717h1v1h-1zM1165 717h2v2h-2zM1165 719h1v1h-1zM1165 749h1v1h-1zM1165 750h2v2h-2zM1165 752h1v1h-1zM1165 786h1v1h-1zM1165 819h1v1h-1zM1165 822h1v1h-1zM1165 823h1v1h-1zM1166 710h1v1h-1zM1166 714h2v2h-2zM1166 715h1v1h-1zM1166 717h1v1h-1zM1166 718h1v1h-1zM1166 719h1v1h-1zM1166 722h1v1h-1zM1166 723h1v1h-1zM1166 725h1v1h-1zM1166 729h1v1h-1zM1166 741h1v1h-1zM1166 745h1v1h-1zM1166 748h1v1h-1zM1166 750h1v1h-1zM1166 751h1v1h-1zM1166 751h2v2h-2zM1166 752h1v1h-1zM1166 754h1v1h-1zM1166 780h2v2h-2zM1166 784h1v1h-1zM1166 787h2v2h-2zM1166 791h2v2h-2zM1167 710h1v1h-1zM1167 714h1v1h-1zM1167 715h1v1h-1zM1167 716h2v2h-2zM1167 718h1v1h-1zM1167 719h1v1h-1zM1167 719h2v2h-2zM1167 720h2v2h-2zM1167 722h1v1h-1zM1167 724h1v1h-1zM1167 751h1v1h-1zM1167 754h1v1h-1zM1167 756h1v1h-1zM1167 760h1v1h-1zM1167 780h1v1h-1zM1167 781h1v1h-1zM1167 782h1v1h-1zM1167 813h2v2h-2zM1168 712h1v1h-1zM1168 715h1v1h-1zM1168 717h2v2h-2zM1168 719h1v1h-1zM1168 720h1v1h-1zM1168 725h1v1h-1zM1168 740h1v1h-1zM1168 747h1v1h-1zM1168 747h2v2h-2zM1168 748h1v1h-1zM1168 749h1v1h-1zM1168 750h1v1h-1zM1168 751h2v2h-2zM1168 753h1v1h-1zM1168 756h1v1h-1zM1168 779h1v1h-1zM1168 784h1v1h-1zM1168 786h2v2h-2zM1168 814h1v1h-1zM1168 818h1v1h-1zM1168 824h1v1h-1zM1168 825h1v1h-1zM1169 707h2v2h-2zM1169 708h1v1h-1zM1169 713h1v1h-1zM1169 715h1v1h-1zM1169 719h2v2h-2zM1169 720h2v2h-2zM1169 721h1v1h-1zM1169 724h2v2h-2zM1169 749h1v1h-1zM1169 751h1v1h-1zM1169 754h2v2h-2zM1169 756h1v1h-1zM1169 757h1v1h-1zM1169 759h2v2h-2zM1169 787h1v1h-1zM1169 791h2v2h-2zM1169 819h1v1h-1zM1169 827h1v1h-1zM1170 708h1v1h-1zM1170 712h1v1h-1zM1170 748h1v1h-1zM1170 748h2v2h-2zM1170 752h1v1h-1zM1170 755h1v1h-1zM1170 779h1v1h-1zM1170 786h1v1h-1zM1170 813h1v1h-1zM1170 815h1v1h-1zM1170 819h1v1h-1zM1170 819h2v2h-2zM1171 713h1v1h-1zM1171 714h1v1h-1zM1171 716h1v1h-1zM1171 717h2v2h-2zM1171 718h1v1h-1zM1171 720h1v1h-1zM1171 722h1v1h-1zM1171 725h2v2h-2zM1171 726h1v1h-1zM1171 743h1v1h-1zM1171 746h1v1h-1zM1171 750h1v1h-1zM1171 751h1v1h-1zM1171 752h1v1h-1zM1171 781h1v1h-1zM1171 781h2v2h-2zM1171 784h1v1h-1zM1171 786h1v1h-1zM1171 786h2v2h-2zM1171 791h2v2h-2zM1171 824h1v1h-1zM1171 825h1v1h-1zM1172 710h1v1h-1zM1172 716h2v2h-2zM1172 747h1v1h-1zM1172 749h1v1h-1zM1172 750h1v1h-1zM1172 753h1v1h-1zM1172 755h1v1h-1zM1172 761h1v1h-1zM1172 782h1v1h-1zM1172 787h1v1h-1zM1172 788h1v1h-1zM1172 817h1v1h-1zM1173 708h1v1h-1zM1173 718h1v1h-1zM1173 727h1v1h-1zM1173 744h1v1h-1zM1173 753h1v1h-1zM1173 780h1v1h-1zM1173 782h1v1h-1zM1173 784h1v1h-1zM1173 789h1v1h-1zM1173 820h1v1h-1zM1173 824h2v2h-2zM1174 709h1v1h-1zM1174 713h1v1h-1zM1174 754h1v1h-1zM1174 755h1v1h-1zM1174 780h1v1h-1zM1174 785h1v1h-1zM1174 814h2v2h-2zM1175 722h1v1h-1zM1175 724h1v1h-1zM1175 781h1v1h-1zM1175 787h1v1h-1zM1175 791h1v1h-1zM1175 814h1v1h-1zM1175 815h2v2h-2zM1175 825h1v1h-1zM1176 724h1v1h-1zM1176 782h1v1h-1zM1176 783h1v1h-1zM1176 784h2v2h-2zM1176 786h2v2h-2zM1176 788h1v1h-1zM1176 788h2v2h-2zM1176 790h1v1h-1zM1176 790h2v2h-2zM1176 821h1v1h-1zM1176 825h1v1h-1zM1177 712h2v2h-2zM1177 781h1v1h-1zM1177 789h1v1h-1zM1177 817h1v1h-1zM1177 821h1v1h-1zM1178 714h1v1h-1zM1178 788h1v1h-1zM1178 816h1v1h-1zM1178 821h1v1h-1zM1179 783h2v2h-2z" fill="#999"/><path d="M1019 817h1v1h-1zM1019 820h1v1h-1zM1020 816h1v1h-1zM1020 818h1v1h-1zM1020 819h1v1h-1zM1021 818h2v2h-2zM1022 818h1v1h-1zM1022 819h1v1h-1zM1022 820h1v1h-1zM1023 818h1v1h-1zM1024 821h1v1h-1zM1024 822h1v1h-1zM1025 709h1v1h-1zM1025 713h1v1h-1zM1025 714h1v1h-1zM1025 714h2v2h-2zM1025 717h1v1h-1zM1025 719h1v1h-1zM1025 820h1v1h-1zM1025 821h1v1h-1zM1026 711h1v1h-1zM1026 719h1v1h-1zM1026 719h2v2h-2zM1026 720h1v1h-1zM1026 723h1v1h-1zM1026 724h2v2h-2zM1026 814h1v1h-1zM1026 816h2v2h-2zM1026 819h1v1h-1zM1027 708h1v1h-1zM1027 712h1v1h-1zM1027 715h1v1h-1zM1027 719h1v1h-1zM1027 814h1v1h-1zM1027 815h1v1h-1zM1027 816h1v1h-1zM1027 817h1v1h-1zM1027 822h2v2h-2zM1027 824h1v1h-1zM1028 709h2v2h-2zM1028 714h1v1h-1zM1028 715h2v2h-2zM1028 716h1v1h-1zM1028 716h2v2h-2zM1028 717h1v1h-1zM1028 718h1v1h-1zM1028 718h2v2h-2zM1028 719h2v2h-2zM1028 720h1v1h-1zM1028 820h1v1h-1zM1029 713h1v1h-1zM1029 714h1v1h-1zM1029 717h1v1h-1zM1029 718h1v1h-1zM1029 719h1v1h-1zM1029 720h1v1h-1zM1029 722h1v1h-1zM1029 723h1v1h-1zM1029 726h1v1h-1zM1029 816h1v1h-1zM1029 817h1v1h-1zM1029 818h1v1h-1zM1029 819h1v1h-1zM1029 822h1v1h-1zM1030 712h2v2h-2zM1030 713h1v1h-1zM1030 715h1v1h-1zM1030 716h2v2h-2zM1030 717h1v1h-1zM1030 721h1v1h-1zM1030 726h1v1h-1zM1030 816h1v1h-1zM1030 818h2v2h-2zM1030 823h1v1h-1zM1030 824h1v1h-1zM1031 709h1v1h-1zM1031 711h1v1h-1zM1031 717h1v1h-1zM1031 718h1v1h-1zM1031 719h1v1h-1zM1031 719h2v2h-2zM1031 720h1v1h-1zM1031 721h1v1h-1zM1031 723h1v1h-1zM1031 815h2v2h-2zM1031 819h1v1h-1zM1031 823h1v1h-1zM1032 717h1v1h-1zM1032 718h1v1h-1zM1032 723h1v1h-1zM1032 815h1v1h-1zM1032 817h1v1h-1zM1032 821h1v1h-1zM1032 825h1v1h-1zM1033 717h1v1h-1zM1033 718h1v1h-1zM1033 718h2v2h-2zM1033 719h1v1h-1zM1033 815h1v1h-1zM1033 817h1v1h-1zM1033 824h1v1h-1zM1034 711h2v2h-2zM1034 712h1v1h-1zM1034 719h1v1h-1zM1034 719h2v2h-2zM1034 819h1v1h-1zM1034 819h2v2h-2zM1034 821h1v1h-1zM1034 823h1v1h-1zM1035 714h1v1h-1zM1035 820h2v2h-2zM1035 821h1v1h-1zM1035 822h1v1h-1zM1036 717h1v1h-1zM1036 719h1v1h-1zM1036 816h2v2h-2zM1036 817h1v1h-1zM1037 818h1v1h-1zM1037 821h1v1h-1zM1038 718h1v1h-1zM1038 819h1v1h-1zM1039 720h1v1h-1zM1039 820h1v1h-1zM1053 781h1v1h-1zM1053 787h1v1h-1zM1054 720h1v1h-1zM1055 714h1v1h-1zM1055 787h1v1h-1zM1055 790h1v1h-1zM1056 793h1v1h-1zM1057 718h1v1h-1zM1057 780h1v1h-1zM1057 781h1v1h-1zM1057 784h1v1h-1zM1057 785h1v1h-1zM1057 788h1v1h-1zM1058 710h1v1h-1zM1058 717h1v1h-1zM1058 780h2v2h-2zM1058 795h1v1h-1zM1059 716h1v1h-1zM1059 720h1v1h-1zM1059 784h1v1h-1zM1059 789h2v2h-2zM1060 718h1v1h-1zM1060 784h1v1h-1zM1060 784h2v2h-2zM1060 785h1v1h-1zM1060 787h1v1h-1zM1060 788h2v2h-2zM1060 792h2v2h-2zM1060 793h1v1h-1zM1061 718h1v1h-1zM1061 782h1v1h-1zM1061 784h1v1h-1zM1061 785h1v1h-1zM1061 786h1v1h-1zM1061 787h1v1h-1zM1061 787h2v2h-2zM1061 788h1v1h-1zM1061 788h2v2h-2zM1062 716h1v1h-1zM1062 717h1v1h-1zM1062 717h2v2h-2zM1062 718h2v2h-2zM1062 721h1v1h-1zM1062 779h1v1h-1zM1062 780h1v1h-1zM1062 781h1v1h-1zM1062 781h2v2h-2zM1062 782h1v1h-1zM1062 783h1v1h-1zM1062 784h1v1h-1zM1062 785h1v1h-1zM1062 785h2v2h-2zM1062 787h1v1h-1zM1062 789h2v2h-2zM1062 790h1v1h-1zM1063 712h1v1h-1zM1063 716h1v1h-1zM1063 717h1v1h-1zM1063 717h2v2h-2zM1063 718h1v1h-1zM1063 718h2v2h-2zM1063 719h1v1h-1zM1063 721h1v1h-1zM1063 781h1v1h-1zM1063 783h1v1h-1zM1063 785h1v1h-1zM1063 786h1v1h-1zM1063 787h1v1h-1zM1063 788h1v1h-1zM1063 791h1v1h-1zM1064 712h1v1h-1zM1064 714h1v1h-1zM1064 715h1v1h-1zM1064 716h1v1h-1zM1064 717h1v1h-1zM1064 718h1v1h-1zM1064 775h1v1h-1zM1064 776h1v1h-1zM1064 780h1v1h-1zM1064 783h1v1h-1zM1064 783h2v2h-2zM1064 784h1v1h-1zM1064 785h1v1h-1zM1064 786h1v1h-1zM1064 790h1v1h-1zM1064 792h2v2h-2zM1065 715h2v2h-2zM1065 717h1v1h-1zM1065 720h1v1h-1zM1065 783h1v1h-1zM1065 784h2v2h-2zM1065 785h1v1h-1zM1065 786h1v1h-1zM1065 787h1v1h-1zM1065 788h1v1h-1zM1065 790h1v1h-1zM1065 790h2v2h-2zM1065 793h1v1h-1zM1066 714h1v1h-1zM1066 716h1v1h-1zM1066 720h1v1h-1zM1066 722h1v1h-1zM1066 782h1v1h-1zM1066 785h1v1h-1zM1066 788h2v2h-2zM1067 714h1v1h-1zM1067 716h1v1h-1zM1067 717h1v1h-1zM1067 724h1v1h-1zM1067 777h1v1h-1zM1067 780h1v1h-1zM1067 780h2v2h-2zM1067 785h1v1h-1zM1067 792h1v1h-1zM1068 718h2v2h-2zM1068 777h1v1h-1zM1068 777h2v2h-2zM1068 780h1v1h-1zM1068 784h2v2h-2zM1068 786h1v1h-1zM1068 787h1v1h-1zM1068 790h1v1h-1zM1069 715h1v1h-1zM1069 776h1v1h-1zM1069 779h1v1h-1zM1069 783h1v1h-1zM1069 783h2v2h-2zM1069 793h1v1h-1zM1070 718h2v2h-2zM1070 781h1v1h-1zM1070 781h2v2h-2zM1071 778h1v1h-1zM1072 781h1v1h-1zM1072 789h2v2h-2zM1074 788h1v1h-1zM1075 791h1v1h-1zM1090 817h1v1h-1zM1092 709h1v1h-1zM1093 716h1v1h-1zM1093 823h1v1h-1zM1094 714h1v1h-1zM1094 716h2v2h-2zM1094 719h1v1h-1zM1094 726h1v1h-1zM1095 717h1v1h-1zM1095 725h1v1h-1zM1096 716h1v1h-1zM1096 717h1v1h-1zM1096 719h1v1h-1zM1096 719h2v2h-2zM1096 720h1v1h-1zM1096 722h1v1h-1zM1096 819h1v1h-1zM1096 820h2v2h-2zM1097 712h2v2h-2zM1097 713h1v1h-1zM1097 714h1v1h-1zM1097 714h2v2h-2zM1097 716h1v1h-1zM1097 717h1v1h-1zM1097 717h2v2h-2zM1097 718h1v1h-1zM1097 719h1v1h-1zM1097 820h1v1h-1zM1098 715h1v1h-1zM1098 717h1v1h-1zM1098 717h2v2h-2zM1098 718h1v1h-1zM1098 718h2v2h-2zM1098 720h2v2h-2zM1098 722h1v1h-1zM1098 820h1v1h-1zM1098 821h1v1h-1zM1098 826h1v1h-1zM1099 710h2v2h-2zM1099 714h2v2h-2zM1099 716h1v1h-1zM1099 716h2v2h-2zM1099 717h1v1h-1zM1099 719h1v1h-1zM1099 720h1v1h-1zM1099 819h2v2h-2zM1099 820h1v1h-1zM1099 823h1v1h-1zM1100 719h1v1h-1zM1100 818h1v1h-1zM1101 716h1v1h-1zM1101 716h2v2h-2zM1101 719h1v1h-1zM1101 720h1v1h-1zM1101 821h1v1h-1zM1101 823h1v1h-1zM1102 815h1v1h-1zM1103 816h1v1h-1zM1103 823h1v1h-1zM1104 721h1v1h-1zM1104 817h1v1h-1zM1104 822h1v1h-1zM1104 824h1v1h-1zM1106 820h1v1h-1zM1108 816h1v1h-1zM1119 784h1v1h-1zM1120 781h1v1h-1zM1120 784h1v1h-1zM1120 793h2v2h-2zM1121 779h1v1h-1zM1121 783h1v1h-1zM1121 791h2v2h-2zM1121 815h1v1h-1zM1121 821h1v1h-1zM1121 823h2v2h-2zM1122 780h1v1h-1zM1122 792h1v1h-1zM1122 814h1v1h-1zM1122 816h1v1h-1zM1122 818h1v1h-1zM1122 820h1v1h-1zM1122 825h1v1h-1zM1123 778h1v1h-1zM1123 785h1v1h-1zM1123 788h1v1h-1zM1123 789h1v1h-1zM1123 790h1v1h-1zM1123 790h2v2h-2zM1123 793h1v1h-1zM1123 813h1v1h-1zM1123 814h1v1h-1zM1123 818h1v1h-1zM1123 819h1v1h-1zM1123 820h1v1h-1zM1123 823h1v1h-1zM1124 776h2v2h-2zM1124 792h1v1h-1zM1124 795h1v1h-1zM1124 815h2v2h-2zM1124 816h1v1h-1zM1124 820h1v1h-1zM1125 786h1v1h-1zM1125 819h1v1h-1zM1125 819h2v2h-2zM1125 823h1v1h-1zM1125 825h1v1h-1zM1126 716h1v1h-1zM1126 722h1v1h-1zM1126 773h1v1h-1zM1126 786h1v1h-1zM1126 791h1v1h-1zM1126 812h2v2h-2zM1126 815h1v1h-1zM1126 818h1v1h-1zM1126 821h1v1h-1zM1126 822h1v1h-1zM1126 825h1v1h-1zM1126 826h1v1h-1zM1126 827h1v1h-1zM1127 775h1v1h-1zM1127 798h1v1h-1zM1127 823h1v1h-1zM1127 825h1v1h-1zM1128 721h1v1h-1zM1128 786h1v1h-1zM1128 822h2v2h-2zM1128 825h2v2h-2zM1129 773h1v1h-1zM1129 781h2v2h-2zM1129 821h1v1h-1zM1129 822h1v1h-1zM1129 825h1v1h-1zM1130 771h2v2h-2zM1130 774h1v1h-1zM1130 781h1v1h-1zM1130 788h1v1h-1zM1130 794h1v1h-1zM1130 811h1v1h-1zM1130 812h1v1h-1zM1130 817h1v1h-1zM1130 817h2v2h-2zM1130 825h1v1h-1zM1131 714h1v1h-1zM1131 719h1v1h-1zM1131 776h1v1h-1zM1131 778h1v1h-1zM1131 784h1v1h-1zM1131 797h1v1h-1zM1131 818h1v1h-1zM1131 825h1v1h-1zM1131 826h1v1h-1zM1132 717h1v1h-1zM1132 718h1v1h-1zM1132 780h2v2h-2zM1132 781h1v1h-1zM1132 788h2v2h-2zM1132 814h1v1h-1zM1132 816h1v1h-1zM1132 822h1v1h-1zM1132 823h1v1h-1zM1133 717h1v1h-1zM1133 719h1v1h-1zM1133 722h1v1h-1zM1133 772h2v2h-2zM1133 780h1v1h-1zM1133 781h2v2h-2zM1133 783h1v1h-1zM1133 787h2v2h-2zM1133 789h2v2h-2zM1133 793h1v1h-1zM1133 812h2v2h-2zM1133 813h1v1h-1zM1133 814h1v1h-1zM1133 814h2v2h-2zM1133 816h2v2h-2zM1133 819h2v2h-2zM1133 827h1v1h-1zM1133 828h1v1h-1zM1134 778h1v1h-1zM1134 784h1v1h-1zM1134 819h1v1h-1zM1134 823h2v2h-2zM1134 824h2v2h-2zM1135 726h1v1h-1zM1135 773h1v1h-1zM1135 792h1v1h-1zM1135 793h1v1h-1zM1135 794h2v2h-2zM1135 815h1v1h-1zM1135 815h2v2h-2zM1135 820h1v1h-1zM1135 821h1v1h-1zM1135 823h1v1h-1zM1135 825h1v1h-1zM1135 826h1v1h-1zM1136 774h1v1h-1zM1136 794h1v1h-1zM1136 796h1v1h-1zM1136 797h1v1h-1zM1136 814h1v1h-1zM1136 821h2v2h-2zM1136 827h1v1h-1zM1137 779h2v2h-2zM1137 783h1v1h-1zM1137 790h2v2h-2zM1137 795h1v1h-1zM1137 813h1v1h-1zM1137 819h2v2h-2zM1137 820h1v1h-1zM1137 823h1v1h-1zM1138 780h1v1h-1zM1138 786h1v1h-1zM1138 816h1v1h-1zM1138 819h1v1h-1zM1138 822h1v1h-1zM1138 824h1v1h-1zM1138 825h1v1h-1zM1139 783h1v1h-1zM1139 788h2v2h-2zM1139 792h1v1h-1zM1139 818h2v2h-2zM1140 785h1v1h-1zM1140 814h2v2h-2zM1140 818h1v1h-1zM1140 819h1v1h-1zM1140 821h1v1h-1zM1140 826h1v1h-1zM1141 776h1v1h-1zM1141 785h2v2h-2zM1141 790h1v1h-1zM1141 793h1v1h-1zM1141 794h1v1h-1zM1141 795h1v1h-1zM1141 815h2v2h-2zM1141 816h1v1h-1zM1141 817h1v1h-1zM1141 820h1v1h-1zM1141 821h2v2h-2zM1142 784h1v1h-1zM1142 814h1v1h-1zM1142 822h1v1h-1zM1142 823h1v1h-1zM1143 780h1v1h-1zM1143 819h1v1h-1zM1143 824h1v1h-1zM1144 785h2v2h-2zM1144 786h2v2h-2zM1144 819h1v1h-1zM1145 782h1v1h-1zM1153 821h1v1h-1zM1154 785h1v1h-1zM1154 787h1v1h-1zM1154 788h1v1h-1zM1154 788h2v2h-2zM1154 820h1v1h-1zM1155 717h1v1h-1zM1155 784h1v1h-1zM1155 790h1v1h-1zM1155 816h1v1h-1zM1156 743h1v1h-1zM1156 757h1v1h-1zM1156 759h2v2h-2zM1156 788h1v1h-1zM1156 819h1v1h-1zM1156 824h1v1h-1zM1157 719h1v1h-1zM1157 760h1v1h-1zM1157 815h1v1h-1zM1157 817h1v1h-1zM1157 818h1v1h-1zM1158 720h1v1h-1zM1158 755h1v1h-1zM1158 785h1v1h-1zM1158 791h1v1h-1zM1158 815h1v1h-1zM1158 821h1v1h-1zM1158 826h1v1h-1zM1159 711h1v1h-1zM1159 712h1v1h-1zM1159 742h2v2h-2zM1159 748h1v1h-1zM1159 788h1v1h-1zM1159 790h1v1h-1zM1159 791h1v1h-1zM1160 715h1v1h-1zM1160 721h1v1h-1zM1160 722h1v1h-1zM1160 744h1v1h-1zM1160 745h1v1h-1zM1160 753h1v1h-1zM1160 762h1v1h-1zM1160 787h1v1h-1zM1160 789h1v1h-1zM1160 816h1v1h-1zM1160 822h1v1h-1zM1160 822h2v2h-2zM1161 712h1v1h-1zM1161 714h1v1h-1zM1161 716h2v2h-2zM1161 717h1v1h-1zM1161 719h1v1h-1zM1161 719h2v2h-2zM1161 722h1v1h-1zM1161 746h1v1h-1zM1161 753h1v1h-1zM1161 783h1v1h-1zM1161 785h1v1h-1zM1161 790h1v1h-1zM1161 814h1v1h-1zM1161 817h1v1h-1zM1161 822h1v1h-1zM1161 827h2v2h-2zM1162 708h1v1h-1zM1162 711h1v1h-1zM1162 712h1v1h-1zM1162 714h1v1h-1zM1162 715h2v2h-2zM1162 718h1v1h-1zM1162 721h1v1h-1zM1162 743h1v1h-1zM1162 747h1v1h-1zM1162 750h1v1h-1zM1162 754h1v1h-1zM1162 757h1v1h-1zM1162 757h2v2h-2zM1162 759h1v1h-1zM1162 761h1v1h-1zM1162 779h1v1h-1zM1162 780h1v1h-1zM1162 782h1v1h-1zM1162 784h1v1h-1zM1162 788h1v1h-1zM1162 791h1v1h-1zM1162 816h1v1h-1zM1163 717h1v1h-1zM1163 720h1v1h-1zM1163 723h1v1h-1zM1163 725h1v1h-1zM1163 745h1v1h-1zM1163 748h2v2h-2zM1163 751h1v1h-1zM1163 753h1v1h-1zM1163 753h2v2h-2zM1163 754h1v1h-1zM1163 757h1v1h-1zM1163 782h1v1h-1zM1163 784h2v2h-2zM1163 786h1v1h-1zM1163 788h1v1h-1zM1163 790h1v1h-1zM1163 792h1v1h-1zM1163 817h1v1h-1zM1163 818h1v1h-1zM1163 821h1v1h-1zM1163 824h1v1h-1zM1164 711h2v2h-2zM1164 712h1v1h-1zM1164 713h1v1h-1zM1164 717h1v1h-1zM1164 719h1v1h-1zM1164 744h1v1h-1zM1164 746h1v1h-1zM1164 747h1v1h-1zM1164 750h1v1h-1zM1164 753h1v1h-1zM1164 754h1v1h-1zM1164 755h1v1h-1zM1164 756h1v1h-1zM1164 781h1v1h-1zM1164 785h1v1h-1zM1164 787h2v2h-2zM1164 788h1v1h-1zM1164 790h1v1h-1zM1164 817h1v1h-1zM1165 710h1v1h-1zM1165 711h1v1h-1zM1165 716h1v1h-1zM1165 717h1v1h-1zM1165 718h1v1h-1zM1165 722h1v1h-1zM1165 723h2v2h-2zM1165 746h2v2h-2zM1165 747h1v1h-1zM1165 748h1v1h-1zM1165 749h1v1h-1zM1165 752h2v2h-2zM1165 756h1v1h-1zM1165 759h1v1h-1zM1165 780h1v1h-1zM1165 781h1v1h-1zM1165 782h1v1h-1zM1165 786h1v1h-1zM1165 786h2v2h-2zM1165 788h1v1h-1zM1165 791h2v2h-2zM1165 792h1v1h-1zM1165 819h1v1h-1zM1165 820h2v2h-2zM1165 824h1v1h-1zM1166 715h1v1h-1zM1166 715h2v2h-2zM1166 716h1v1h-1zM1166 717h1v1h-1zM1166 717h2v2h-2zM1166 718h1v1h-1zM1166 719h1v1h-1zM1166 719h2v2h-2zM1166 720h1v1h-1zM1166 742h1v1h-1zM1166 745h1v1h-1zM1166 745h2v2h-2zM1166 750h1v1h-1zM1166 751h1v1h-1zM1166 752h1v1h-1zM1166 755h1v1h-1zM1166 782h1v1h-1zM1166 790h1v1h-1zM1166 791h1v1h-1zM1166 815h1v1h-1zM1166 816h2v2h-2zM1166 817h1v1h-1zM1166 818h2v2h-2zM1166 821h2v2h-2zM1167 707h1v1h-1zM1167 710h1v1h-1zM1167 712h1v1h-1zM1167 713h1v1h-1zM1167 715h1v1h-1zM1167 716h1v1h-1zM1167 717h1v1h-1zM1167 718h1v1h-1zM1167 719h1v1h-1zM1167 720h1v1h-1zM1167 723h1v1h-1zM1167 724h1v1h-1zM1167 748h1v1h-1zM1167 750h1v1h-1zM1167 752h1v1h-1zM1167 758h2v2h-2zM1167 784h1v1h-1zM1167 788h1v1h-1zM1167 825h2v2h-2zM1167 829h2v2h-2zM1168 715h1v1h-1zM1168 716h1v1h-1zM1168 718h1v1h-1zM1168 721h1v1h-1zM1168 724h2v2h-2zM1168 726h1v1h-1zM1168 729h1v1h-1zM1168 742h1v1h-1zM1168 745h1v1h-1zM1168 747h1v1h-1zM1168 748h1v1h-1zM1168 749h1v1h-1zM1168 750h1v1h-1zM1168 752h1v1h-1zM1168 753h1v1h-1zM1168 757h1v1h-1zM1168 758h1v1h-1zM1168 759h1v1h-1zM1168 779h2v2h-2zM1168 785h1v1h-1zM1169 712h1v1h-1zM1169 713h1v1h-1zM1169 716h1v1h-1zM1169 719h1v1h-1zM1169 721h2v2h-2zM1169 723h1v1h-1zM1169 725h1v1h-1zM1169 728h1v1h-1zM1169 748h2v2h-2zM1169 750h1v1h-1zM1169 754h1v1h-1zM1169 784h1v1h-1zM1169 787h1v1h-1zM1169 815h1v1h-1zM1169 817h1v1h-1zM1169 819h1v1h-1zM1170 712h1v1h-1zM1170 714h1v1h-1zM1170 718h1v1h-1zM1170 722h1v1h-1zM1170 744h1v1h-1zM1170 745h1v1h-1zM1170 747h1v1h-1zM1170 748h1v1h-1zM1170 749h1v1h-1zM1170 750h2v2h-2zM1170 755h1v1h-1zM1170 756h1v1h-1zM1170 763h2v2h-2zM1170 779h1v1h-1zM1170 781h2v2h-2zM1170 816h1v1h-1zM1171 714h2v2h-2zM1171 716h1v1h-1zM1171 718h2v2h-2zM1171 743h2v2h-2zM1171 750h2v2h-2zM1171 758h2v2h-2zM1171 781h1v1h-1zM1171 785h2v2h-2zM1171 786h1v1h-1zM1171 789h1v1h-1zM1171 811h1v1h-1zM1171 821h1v1h-1zM1172 708h1v1h-1zM1172 712h1v1h-1zM1172 715h1v1h-1zM1172 717h1v1h-1zM1172 717h2v2h-2zM1172 721h1v1h-1zM1172 747h1v1h-1zM1172 756h1v1h-1zM1172 760h1v1h-1zM1172 781h1v1h-1zM1172 790h1v1h-1zM1172 822h1v1h-1zM1172 825h2v2h-2zM1173 709h1v1h-1zM1173 712h1v1h-1zM1173 720h1v1h-1zM1173 745h1v1h-1zM1173 747h1v1h-1zM1173 751h1v1h-1zM1173 757h2v2h-2zM1173 779h1v1h-1zM1173 780h1v1h-1zM1173 781h1v1h-1zM1173 783h2v2h-2zM1173 787h1v1h-1zM1173 789h1v1h-1zM1173 819h1v1h-1zM1174 719h1v1h-1zM1174 724h1v1h-1zM1174 726h2v2h-2zM1174 752h1v1h-1zM1174 754h1v1h-1zM1174 780h1v1h-1zM1174 784h2v2h-2zM1174 787h1v1h-1zM1174 789h2v2h-2zM1174 790h2v2h-2zM1174 791h1v1h-1zM1175 710h2v2h-2zM1175 747h1v1h-1zM1175 750h1v1h-1zM1175 754h1v1h-1zM1175 819h1v1h-1zM1175 820h2v2h-2zM1175 821h2v2h-2zM1176 710h2v2h-2zM1176 786h2v2h-2zM1176 787h1v1h-1zM1176 788h1v1h-1zM1176 816h2v2h-2zM1176 824h1v1h-1zM1177 782h1v1h-1zM1177 783h1v1h-1zM1177 823h1v1h-1zM1179 782h1v1h-1zM1179 784h1v1h-1zM1179 787h1v1h-1z" fill="#555"/><path d="M1019 817h1v1h-1zM1020 818h1v1h-1zM1020 822h1v1h-1zM1021 816h1v1h-1zM1021 818h1v1h-1zM1022 722h1v1h-1zM1022 815h1v1h-1zM1022 817h2v2h-2zM1022 818h1v1h-1zM1022 818h2v2h-2zM1022 819h1v1h-1zM1022 823h1v1h-1zM1023 718h1v1h-1zM1023 720h1v1h-1zM1023 815h1v1h-1zM1023 817h1v1h-1zM1023 817h2v2h-2zM1023 819h1v1h-1zM1023 821h1v1h-1zM1023 823h2v2h-2zM1024 708h1v1h-1zM1024 712h2v2h-2zM1024 714h2v2h-2zM1024 716h2v2h-2zM1024 717h1v1h-1zM1024 718h1v1h-1zM1024 719h2v2h-2zM1024 721h1v1h-1zM1024 815h1v1h-1zM1024 815h2v2h-2zM1024 820h1v1h-1zM1025 707h1v1h-1zM1025 711h1v1h-1zM1025 712h1v1h-1zM1025 713h2v2h-2zM1025 715h2v2h-2zM1025 718h1v1h-1zM1025 721h1v1h-1zM1025 722h1v1h-1zM1025 815h2v2h-2zM1025 818h1v1h-1zM1025 824h2v2h-2zM1026 711h1v1h-1zM1026 714h1v1h-1zM1026 715h1v1h-1zM1026 716h2v2h-2zM1026 717h1v1h-1zM1026 717h2v2h-2zM1026 718h1v1h-1zM1026 718h2v2h-2zM1026 719h1v1h-1zM1026 720h1v1h-1zM1026 814h1v1h-1zM1026 814h2v2h-2zM1026 815h1v1h-1zM1026 818h1v1h-1zM1026 818h2v2h-2zM1026 820h1v1h-1zM1026 821h1v1h-1zM1026 822h1v1h-1zM1026 823h1v1h-1zM1026 824h1v1h-1zM1026 825h1v1h-1zM1027 714h1v1h-1zM1027 715h1v1h-1zM1027 715h2v2h-2zM1027 716h1v1h-1zM1027 717h1v1h-1zM1027 718h1v1h-1zM1027 718h2v2h-2zM1027 719h1v1h-1zM1027 719h2v2h-2zM1027 720h1v1h-1zM1027 721h1v1h-1zM1027 815h1v1h-1zM1027 816h1v1h-1zM1027 824h1v1h-1zM1028 709h1v1h-1zM1028 710h1v1h-1zM1028 711h1v1h-1zM1028 712h1v1h-1zM1028 714h1v1h-1zM1028 715h2v2h-2zM1028 716h1v1h-1zM1028 716h2v2h-2zM1028 717h1v1h-1zM1028 717h2v2h-2zM1028 718h1v1h-1zM1028 719h2v2h-2zM1028 725h1v1h-1zM1028 816h1v1h-1zM1028 817h1v1h-1zM1028 817h2v2h-2zM1028 822h1v1h-1zM1029 708h2v2h-2zM1029 710h1v1h-1zM1029 712h1v1h-1zM1029 713h1v1h-1zM1029 714h1v1h-1zM1029 715h1v1h-1zM1029 716h1v1h-1zM1029 716h2v2h-2zM1029 717h1v1h-1zM1029 717h2v2h-2zM1029 718h1v1h-1zM1029 718h2v2h-2zM1029 719h1v1h-1zM1029 720h1v1h-1zM1029 720h2v2h-2zM1029 721h1v1h-1zM1029 724h1v1h-1zM1029 816h1v1h-1zM1029 819h1v1h-1zM1029 820h2v2h-2zM1029 821h1v1h-1zM1029 823h1v1h-1zM1029 825h1v1h-1zM1030 708h1v1h-1zM1030 710h1v1h-1zM1030 711h1v1h-1zM1030 712h1v1h-1zM1030 713h1v1h-1zM1030 713h2v2h-2zM1030 714h1v1h-1zM1030 715h1v1h-1zM1030 715h2v2h-2zM1030 716h1v1h-1zM1030 717h1v1h-1zM1030 717h2v2h-2zM1030 718h1v1h-1zM1030 718h2v2h-2zM1030 719h1v1h-1zM1030 720h1v1h-1zM1030 721h1v1h-1zM1030 721h2v2h-2zM1030 722h1v1h-1zM1030 723h1v1h-1zM1030 815h1v1h-1zM1030 816h1v1h-1zM1030 818h1v1h-1zM1030 819h1v1h-1zM1030 820h1v1h-1zM1030 825h1v1h-1zM1031 712h1v1h-1zM1031 714h1v1h-1zM1031 714h2v2h-2zM1031 715h1v1h-1zM1031 715h2v2h-2zM1031 716h1v1h-1zM1031 717h1v1h-1zM1031 718h1v1h-1zM1031 720h1v1h-1zM1031 721h1v1h-1zM1031 814h1v1h-1zM1031 817h1v1h-1zM1031 818h1v1h-1zM1031 820h2v2h-2zM1031 821h1v1h-1zM1031 822h1v1h-1zM1031 823h1v1h-1zM1032 709h1v1h-1zM1032 715h1v1h-1zM1032 716h1v1h-1zM1032 718h1v1h-1zM1032 719h1v1h-1zM1032 721h1v1h-1zM1032 722h1v1h-1zM1032 817h1v1h-1zM1032 823h1v1h-1zM1032 823h2v2h-2zM1032 825h1v1h-1zM1032 825h2v2h-2zM1033 710h1v1h-1zM1033 713h1v1h-1zM1033 714h1v1h-1zM1033 715h1v1h-1zM1033 716h1v1h-1zM1033 717h1v1h-1zM1033 717h2v2h-2zM1033 718h1v1h-1zM1033 720h1v1h-1zM1033 721h1v1h-1zM1033 721h2v2h-2zM1033 722h2v2h-2zM1033 724h1v1h-1zM1033 817h1v1h-1zM1033 817h2v2h-2zM1033 818h1v1h-1zM1033 819h1v1h-1zM1033 820h1v1h-1zM1033 825h1v1h-1zM1034 717h1v1h-1zM1034 718h1v1h-1zM1034 720h1v1h-1zM1034 815h2v2h-2zM1034 816h1v1h-1zM1034 817h1v1h-1zM1034 818h1v1h-1zM1034 819h1v1h-1zM1034 821h1v1h-1zM1034 824h1v1h-1zM1034 825h2v2h-2zM1035 715h1v1h-1zM1035 716h1v1h-1zM1035 718h1v1h-1zM1035 720h2v2h-2zM1035 817h1v1h-1zM1035 820h1v1h-1zM1035 821h1v1h-1zM1035 823h1v1h-1zM1036 717h2v2h-2zM1036 718h1v1h-1zM1036 722h1v1h-1zM1036 724h1v1h-1zM1036 817h1v1h-1zM1036 822h2v2h-2zM1037 711h1v1h-1zM1037 715h1v1h-1zM1037 716h1v1h-1zM1037 717h1v1h-1zM1037 817h1v1h-1zM1037 818h1v1h-1zM1038 716h1v1h-1zM1038 721h1v1h-1zM1038 818h2v2h-2zM1039 819h1v1h-1zM1039 820h1v1h-1zM1039 822h1v1h-1zM1040 820h1v1h-1zM1053 783h1v1h-1zM1053 794h1v1h-1zM1054 787h1v1h-1zM1054 791h1v1h-1zM1055 780h1v1h-1zM1055 783h1v1h-1zM1055 785h1v1h-1zM1055 786h1v1h-1zM1055 787h2v2h-2zM1056 775h1v1h-1zM1056 780h1v1h-1zM1056 781h2v2h-2zM1056 782h2v2h-2zM1056 784h1v1h-1zM1056 786h1v1h-1zM1056 788h1v1h-1zM1056 789h1v1h-1zM1057 718h2v2h-2zM1057 776h1v1h-1zM1057 777h1v1h-1zM1057 786h1v1h-1zM1057 787h2v2h-2zM1057 788h1v1h-1zM1058 715h1v1h-1zM1058 716h1v1h-1zM1058 717h1v1h-1zM1058 719h1v1h-1zM1058 780h1v1h-1zM1058 783h1v1h-1zM1058 784h1v1h-1zM1058 785h1v1h-1zM1058 786h1v1h-1zM1058 794h1v1h-1zM1059 709h1v1h-1zM1059 716h1v1h-1zM1059 717h1v1h-1zM1059 781h1v1h-1zM1059 782h1v1h-1zM1059 786h1v1h-1zM1059 787h1v1h-1zM1059 788h1v1h-1zM1059 789h1v1h-1zM1059 789h2v2h-2zM1060 712h2v2h-2zM1060 718h1v1h-1zM1060 719h1v1h-1zM1060 774h1v1h-1zM1060 777h2v2h-2zM1060 778h2v2h-2zM1060 781h2v2h-2zM1060 782h1v1h-1zM1060 783h1v1h-1zM1060 783h2v2h-2zM1060 784h1v1h-1zM1060 785h1v1h-1zM1060 786h1v1h-1zM1060 787h2v2h-2zM1060 789h1v1h-1zM1060 790h1v1h-1zM1060 794h1v1h-1zM1060 796h2v2h-2zM1061 714h1v1h-1zM1061 715h2v2h-2zM1061 716h1v1h-1zM1061 718h1v1h-1zM1061 719h1v1h-1zM1061 720h1v1h-1zM1061 721h1v1h-1zM1061 776h2v2h-2zM1061 778h2v2h-2zM1061 779h2v2h-2zM1061 781h1v1h-1zM1061 781h2v2h-2zM1061 782h1v1h-1zM1061 783h1v1h-1zM1061 784h1v1h-1zM1061 784h2v2h-2zM1061 785h1v1h-1zM1061 785h2v2h-2zM1061 786h1v1h-1zM1061 787h1v1h-1zM1061 792h2v2h-2zM1061 793h1v1h-1zM1061 794h1v1h-1zM1061 797h1v1h-1zM1062 717h2v2h-2zM1062 718h1v1h-1zM1062 721h1v1h-1zM1062 781h1v1h-1zM1062 782h1v1h-1zM1062 783h1v1h-1zM1062 783h2v2h-2zM1062 784h1v1h-1zM1062 785h1v1h-1zM1062 786h1v1h-1zM1062 787h1v1h-1zM1062 788h2v2h-2zM1062 789h1v1h-1zM1062 793h1v1h-1zM1062 794h1v1h-1zM1063 715h1v1h-1zM1063 716h1v1h-1zM1063 717h1v1h-1zM1063 717h2v2h-2zM1063 718h2v2h-2zM1063 719h1v1h-1zM1063 721h2v2h-2zM1063 723h1v1h-1zM1063 779h1v1h-1zM1063 781h1v1h-1zM1063 785h1v1h-1zM1063 786h1v1h-1zM1063 786h2v2h-2zM1063 787h1v1h-1zM1063 787h2v2h-2zM1063 788h1v1h-1zM1063 789h1v1h-1zM1063 790h1v1h-1zM1063 792h1v1h-1zM1063 794h1v1h-1zM1064 712h1v1h-1zM1064 713h2v2h-2zM1064 715h1v1h-1zM1064 716h1v1h-1zM1064 716h2v2h-2zM1064 717h1v1h-1zM1064 718h1v1h-1zM1064 719h1v1h-1zM1064 720h1v1h-1zM1064 721h1v1h-1zM1064 777h1v1h-1zM1064 779h1v1h-1zM1064 780h1v1h-1zM1064 780h2v2h-2zM1064 781h1v1h-1zM1064 782h1v1h-1zM1064 783h1v1h-1zM1064 784h1v1h-1zM1064 785h1v1h-1zM1064 785h2v2h-2zM1064 786h1v1h-1zM1064 787h1v1h-1zM1064 788h1v1h-1zM1064 789h2v2h-2zM1064 790h2v2h-2zM1064 792h1v1h-1zM1064 792h2v2h-2zM1065 714h1v1h-1zM1065 714h2v2h-2zM1065 715h1v1h-1zM1065 715h2v2h-2zM1065 716h1v1h-1zM1065 717h1v1h-1zM1065 718h1v1h-1zM1065 719h1v1h-1zM1065 778h2v2h-2zM1065 779h2v2h-2zM1065 780h1v1h-1zM1065 783h1v1h-1zM1065 783h2v2h-2zM1065 785h1v1h-1zM1065 786h1v1h-1zM1065 786h2v2h-2zM1065 787h1v1h-1zM1065 787h2v2h-2zM1065 788h1v1h-1zM1065 790h1v1h-1zM1065 792h2v2h-2zM1066 714h1v1h-1zM1066 715h1v1h-1zM1066 716h1v1h-1zM1066 717h1v1h-1zM1066 719h2v2h-2zM1066 775h2v2h-2zM1066 783h1v1h-1zM1066 785h1v1h-1zM1066 785h2v2h-2zM1066 786h2v2h-2zM1066 787h1v1h-1zM1066 791h1v1h-1zM1066 794h1v1h-1zM1067 714h2v2h-2zM1067 715h1v1h-1zM1067 716h1v1h-1zM1067 717h1v1h-1zM1067 775h1v1h-1zM1067 779h1v1h-1zM1067 780h1v1h-1zM1067 781h1v1h-1zM1067 781h2v2h-2zM1067 783h1v1h-1zM1067 783h2v2h-2zM1067 784h1v1h-1zM1067 785h1v1h-1zM1067 786h1v1h-1zM1067 787h1v1h-1zM1067 788h1v1h-1zM1067 789h2v2h-2zM1067 793h1v1h-1zM1068 710h1v1h-1zM1068 712h1v1h-1zM1068 715h1v1h-1zM1068 715h2v2h-2zM1068 716h1v1h-1zM1068 717h1v1h-1zM1068 783h1v1h-1zM1068 784h1v1h-1zM1068 787h1v1h-1zM1068 789h1v1h-1zM1068 790h1v1h-1zM1068 793h2v2h-2zM1069 713h1v1h-1zM1069 716h1v1h-1zM1069 720h2v2h-2zM1069 775h1v1h-1zM1069 779h1v1h-1zM1069 780h1v1h-1zM1069 780h2v2h-2zM1069 782h1v1h-1zM1069 787h2v2h-2zM1069 790h2v2h-2zM1069 791h1v1h-1zM1069 793h1v1h-1zM1069 794h1v1h-1zM1069 797h1v1h-1zM1070 784h1v1h-1zM1070 785h1v1h-1zM1070 787h1v1h-1zM1070 788h2v2h-2zM1071 715h1v1h-1zM1071 717h2v2h-2zM1071 718h1v1h-1zM1071 780h1v1h-1zM1071 781h1v1h-1zM1071 783h2v2h-2zM1071 787h2v2h-2zM1071 789h2v2h-2zM1071 790h1v1h-1zM1071 790h2v2h-2zM1071 794h2v2h-2zM1072 716h1v1h-1zM1072 781h1v1h-1zM1072 784h1v1h-1zM1072 788h1v1h-1zM1072 790h1v1h-1zM1073 716h1v1h-1zM1073 719h1v1h-1zM1073 785h1v1h-1zM1073 788h1v1h-1zM1074 788h2v2h-2zM1075 786h1v1h-1zM1089 817h1v1h-1zM1091 820h1v1h-1zM1092 717h1v1h-1zM1092 718h1v1h-1zM1092 720h1v1h-1zM1092 819h1v1h-1zM1093 716h1v1h-1zM1093 718h1v1h-1zM1093 719h2v2h-2zM1093 720h1v1h-1zM1093 723h1v1h-1zM1093 727h1v1h-1zM1093 818h1v1h-1zM1093 819h2v2h-2zM1093 820h1v1h-1zM1093 826h1v1h-1zM1094 712h1v1h-1zM1094 715h1v1h-1zM1094 717h1v1h-1zM1094 718h1v1h-1zM1094 720h1v1h-1zM1094 815h1v1h-1zM1094 818h1v1h-1zM1094 819h1v1h-1zM1094 820h1v1h-1zM1094 824h1v1h-1zM1095 714h1v1h-1zM1095 716h1v1h-1zM1095 720h1v1h-1zM1095 721h2v2h-2zM1095 722h2v2h-2zM1095 817h1v1h-1zM1095 820h1v1h-1zM1095 820h2v2h-2zM1095 823h1v1h-1zM1095 823h2v2h-2zM1096 713h1v1h-1zM1096 717h1v1h-1zM1096 717h2v2h-2zM1096 718h1v1h-1zM1096 719h1v1h-1zM1096 720h1v1h-1zM1096 722h1v1h-1zM1096 815h1v1h-1zM1096 816h1v1h-1zM1096 818h1v1h-1zM1097 711h1v1h-1zM1097 712h1v1h-1zM1097 714h1v1h-1zM1097 715h1v1h-1zM1097 717h1v1h-1zM1097 717h2v2h-2zM1097 718h1v1h-1zM1097 723h1v1h-1zM1097 816h1v1h-1zM1097 819h1v1h-1zM1097 820h1v1h-1zM1097 822h1v1h-1zM1098 712h1v1h-1zM1098 714h1v1h-1zM1098 715h1v1h-1zM1098 716h1v1h-1zM1098 716h2v2h-2zM1098 717h1v1h-1zM1098 717h2v2h-2zM1098 718h1v1h-1zM1098 719h1v1h-1zM1098 719h2v2h-2zM1098 720h1v1h-1zM1098 723h1v1h-1zM1098 724h1v1h-1zM1098 724h2v2h-2zM1098 819h1v1h-1zM1099 715h1v1h-1zM1099 716h2v2h-2zM1099 717h1v1h-1zM1099 718h1v1h-1zM1099 720h1v1h-1zM1099 725h1v1h-1zM1099 814h1v1h-1zM1099 816h2v2h-2zM1099 818h1v1h-1zM1099 819h2v2h-2zM1099 823h2v2h-2zM1100 711h1v1h-1zM1100 713h1v1h-1zM1100 717h1v1h-1zM1100 719h2v2h-2zM1100 720h1v1h-1zM1100 721h1v1h-1zM1100 723h1v1h-1zM1100 819h1v1h-1zM1100 820h1v1h-1zM1101 714h1v1h-1zM1101 716h1v1h-1zM1101 719h1v1h-1zM1101 724h1v1h-1zM1102 716h1v1h-1zM1102 717h1v1h-1zM1102 720h1v1h-1zM1102 817h1v1h-1zM1102 823h1v1h-1zM1103 717h1v1h-1zM1103 722h1v1h-1zM1103 816h1v1h-1zM1103 818h1v1h-1zM1103 820h2v2h-2zM1104 711h1v1h-1zM1104 822h1v1h-1zM1105 819h2v2h-2zM1105 820h1v1h-1zM1119 781h1v1h-1zM1119 783h1v1h-1zM1119 784h1v1h-1zM1119 817h1v1h-1zM1119 822h1v1h-1zM1120 791h1v1h-1zM1120 815h1v1h-1zM1120 817h2v2h-2zM1120 820h1v1h-1zM1120 823h1v1h-1zM1120 823h2v2h-2zM1121 786h1v1h-1zM1121 792h1v1h-1zM1121 793h1v1h-1zM1121 816h1v1h-1zM1121 816h2v2h-2zM1121 818h1v1h-1zM1121 821h1v1h-1zM1122 776h1v1h-1zM1122 791h1v1h-1zM1122 815h1v1h-1zM1122 819h1v1h-1zM1122 820h1v1h-1zM1122 824h1v1h-1zM1122 824h2v2h-2zM1123 779h1v1h-1zM1123 786h1v1h-1zM1123 789h2v2h-2zM1123 790h1v1h-1zM1123 791h1v1h-1zM1123 792h1v1h-1zM1123 795h1v1h-1zM1123 816h1v1h-1zM1123 820h1v1h-1zM1123 822h1v1h-1zM1123 823h1v1h-1zM1124 782h1v1h-1zM1124 784h1v1h-1zM1124 787h1v1h-1zM1124 816h1v1h-1zM1124 818h2v2h-2zM1124 822h1v1h-1zM1124 823h2v2h-2zM1124 824h1v1h-1zM1125 774h2v2h-2zM1125 778h1v1h-1zM1125 781h1v1h-1zM1125 795h1v1h-1zM1125 820h2v2h-2zM1125 827h1v1h-1zM1126 716h1v1h-1zM1126 723h1v1h-1zM1126 774h1v1h-1zM1126 775h1v1h-1zM1126 782h1v1h-1zM1126 812h1v1h-1zM1126 813h1v1h-1zM1126 815h1v1h-1zM1126 816h1v1h-1zM1126 819h1v1h-1zM1126 821h2v2h-2zM1126 822h1v1h-1zM1126 824h1v1h-1zM1127 717h2v2h-2zM1127 773h1v1h-1zM1127 779h1v1h-1zM1127 781h2v2h-2zM1127 782h1v1h-1zM1127 785h2v2h-2zM1127 793h1v1h-1zM1127 797h1v1h-1zM1127 813h2v2h-2zM1127 814h1v1h-1zM1127 816h1v1h-1zM1127 818h1v1h-1zM1127 821h1v1h-1zM1127 823h1v1h-1zM1127 827h1v1h-1zM1128 776h1v1h-1zM1128 786h1v1h-1zM1128 791h1v1h-1zM1128 792h1v1h-1zM1128 814h1v1h-1zM1128 816h1v1h-1zM1128 817h1v1h-1zM1128 818h1v1h-1zM1128 820h1v1h-1zM1128 822h1v1h-1zM1128 823h1v1h-1zM1128 824h1v1h-1zM1128 826h2v2h-2zM1128 827h1v1h-1zM1128 828h1v1h-1zM1129 717h1v1h-1zM1129 773h1v1h-1zM1129 785h1v1h-1zM1129 786h2v2h-2zM1129 790h1v1h-1zM1129 815h1v1h-1zM1129 817h1v1h-1zM1129 818h1v1h-1zM1129 819h2v2h-2zM1129 820h1v1h-1zM1129 823h1v1h-1zM1129 823h2v2h-2zM1129 824h1v1h-1zM1129 825h1v1h-1zM1130 716h1v1h-1zM1130 717h1v1h-1zM1130 717h2v2h-2zM1130 718h2v2h-2zM1130 778h1v1h-1zM1130 779h2v2h-2zM1130 782h1v1h-1zM1130 786h1v1h-1zM1130 794h1v1h-1zM1130 813h1v1h-1zM1130 815h1v1h-1zM1130 816h1v1h-1zM1130 818h2v2h-2zM1130 821h1v1h-1zM1130 822h1v1h-1zM1130 823h1v1h-1zM1130 824h1v1h-1zM1130 827h1v1h-1zM1131 710h1v1h-1zM1131 716h1v1h-1zM1131 717h1v1h-1zM1131 718h1v1h-1zM1131 718h2v2h-2zM1131 721h1v1h-1zM1131 775h1v1h-1zM1131 780h2v2h-2zM1131 785h1v1h-1zM1131 791h1v1h-1zM1131 813h1v1h-1zM1131 817h1v1h-1zM1131 817h2v2h-2zM1131 826h1v1h-1zM1131 827h1v1h-1zM1132 715h1v1h-1zM1132 716h1v1h-1zM1132 717h1v1h-1zM1132 717h2v2h-2zM1132 718h2v2h-2zM1132 719h1v1h-1zM1132 775h2v2h-2zM1132 776h1v1h-1zM1132 777h1v1h-1zM1132 778h2v2h-2zM1132 787h1v1h-1zM1132 788h1v1h-1zM1132 791h1v1h-1zM1132 796h1v1h-1zM1132 814h1v1h-1zM1132 820h2v2h-2zM1132 825h1v1h-1zM1132 829h1v1h-1zM1133 714h1v1h-1zM1133 716h1v1h-1zM1133 719h1v1h-1zM1133 720h1v1h-1zM1133 722h1v1h-1zM1133 774h1v1h-1zM1133 776h1v1h-1zM1133 790h2v2h-2zM1133 792h1v1h-1zM1133 793h1v1h-1zM1133 795h1v1h-1zM1133 824h1v1h-1zM1133 825h1v1h-1zM1133 826h1v1h-1zM1133 828h1v1h-1zM1133 829h1v1h-1zM1134 715h1v1h-1zM1134 775h1v1h-1zM1134 778h1v1h-1zM1134 780h2v2h-2zM1134 784h1v1h-1zM1134 785h2v2h-2zM1134 814h1v1h-1zM1134 815h1v1h-1zM1134 816h1v1h-1zM1134 819h1v1h-1zM1134 820h1v1h-1zM1134 821h1v1h-1zM1134 824h1v1h-1zM1134 826h2v2h-2zM1134 827h1v1h-1zM1134 828h2v2h-2zM1135 721h1v1h-1zM1135 782h1v1h-1zM1135 782h2v2h-2zM1135 783h1v1h-1zM1135 813h1v1h-1zM1135 818h1v1h-1zM1135 819h1v1h-1zM1135 822h1v1h-1zM1135 828h1v1h-1zM1136 723h1v1h-1zM1136 774h1v1h-1zM1136 779h1v1h-1zM1136 788h1v1h-1zM1136 797h1v1h-1zM1136 813h1v1h-1zM1136 817h1v1h-1zM1136 818h1v1h-1zM1136 819h1v1h-1zM1136 823h1v1h-1zM1136 824h1v1h-1zM1136 826h1v1h-1zM1136 828h1v1h-1zM1137 717h2v2h-2zM1137 776h2v2h-2zM1137 778h1v1h-1zM1137 813h1v1h-1zM1137 815h1v1h-1zM1137 815h2v2h-2zM1137 817h2v2h-2zM1137 818h1v1h-1zM1137 818h2v2h-2zM1137 820h1v1h-1zM1137 821h1v1h-1zM1137 822h1v1h-1zM1137 822h2v2h-2zM1137 823h1v1h-1zM1137 824h1v1h-1zM1137 825h1v1h-1zM1138 715h1v1h-1zM1138 777h1v1h-1zM1138 790h2v2h-2zM1138 794h1v1h-1zM1138 818h1v1h-1zM1138 821h1v1h-1zM1138 822h1v1h-1zM1138 824h1v1h-1zM1138 827h1v1h-1zM1139 714h2v2h-2zM1139 774h1v1h-1zM1139 782h1v1h-1zM1139 784h1v1h-1zM1139 787h1v1h-1zM1139 792h1v1h-1zM1139 812h1v1h-1zM1139 815h1v1h-1zM1139 816h2v2h-2zM1139 818h1v1h-1zM1139 818h2v2h-2zM1139 821h1v1h-1zM1139 822h1v1h-1zM1139 823h2v2h-2zM1139 826h1v1h-1zM1140 782h1v1h-1zM1140 783h1v1h-1zM1140 788h1v1h-1zM1140 797h1v1h-1zM1140 797h2v2h-2zM1140 814h1v1h-1zM1140 817h1v1h-1zM1140 818h1v1h-1zM1140 824h2v2h-2zM1141 719h1v1h-1zM1141 777h2v2h-2zM1141 790h2v2h-2zM1141 793h2v2h-2zM1141 819h1v1h-1zM1141 821h1v1h-1zM1141 826h1v1h-1zM1142 777h1v1h-1zM1142 778h1v1h-1zM1142 791h1v1h-1zM1142 794h1v1h-1zM1142 816h1v1h-1zM1142 819h1v1h-1zM1142 820h1v1h-1zM1142 822h2v2h-2zM1142 823h1v1h-1zM1142 823h2v2h-2zM1142 824h2v2h-2zM1143 779h1v1h-1zM1143 786h1v1h-1zM1143 819h1v1h-1zM1143 821h1v1h-1zM1144 781h2v2h-2zM1144 818h1v1h-1zM1144 821h1v1h-1zM1145 781h2v2h-2zM1145 782h2v2h-2zM1153 784h1v1h-1zM1153 785h2v2h-2zM1153 786h1v1h-1zM1153 787h1v1h-1zM1153 787h2v2h-2zM1153 788h1v1h-1zM1154 820h1v1h-1zM1154 821h1v1h-1zM1155 715h1v1h-1zM1155 746h2v2h-2zM1155 781h1v1h-1zM1155 786h1v1h-1zM1155 787h1v1h-1zM1155 787h2v2h-2zM1155 788h1v1h-1zM1155 788h2v2h-2zM1155 789h1v1h-1zM1155 824h1v1h-1zM1155 825h1v1h-1zM1156 710h1v1h-1zM1156 716h1v1h-1zM1156 744h1v1h-1zM1156 755h1v1h-1zM1156 782h1v1h-1zM1156 783h1v1h-1zM1156 784h1v1h-1zM1156 785h1v1h-1zM1156 785h2v2h-2zM1156 787h1v1h-1zM1156 788h2v2h-2zM1156 789h2v2h-2zM1156 819h1v1h-1zM1157 713h2v2h-2zM1157 717h2v2h-2zM1157 718h2v2h-2zM1157 724h1v1h-1zM1157 748h1v1h-1zM1157 755h1v1h-1zM1157 787h1v1h-1zM1157 788h1v1h-1zM1157 789h2v2h-2zM1157 790h1v1h-1zM1157 815h1v1h-1zM1157 817h1v1h-1zM1157 824h2v2h-2zM1157 825h1v1h-1zM1158 719h1v1h-1zM1158 721h1v1h-1zM1158 751h1v1h-1zM1158 752h1v1h-1zM1158 753h1v1h-1zM1158 754h1v1h-1zM1158 760h1v1h-1zM1158 782h1v1h-1zM1158 783h1v1h-1zM1158 784h1v1h-1zM1158 784h2v2h-2zM1158 785h1v1h-1zM1158 788h1v1h-1zM1158 789h2v2h-2zM1158 791h2v2h-2zM1158 813h1v1h-1zM1158 819h1v1h-1zM1158 819h2v2h-2zM1158 825h1v1h-1zM1158 827h1v1h-1zM1159 708h1v1h-1zM1159 716h1v1h-1zM1159 716h2v2h-2zM1159 721h1v1h-1zM1159 724h2v2h-2zM1159 748h1v1h-1zM1159 751h2v2h-2zM1159 752h1v1h-1zM1159 752h2v2h-2zM1159 754h2v2h-2zM1159 755h1v1h-1zM1159 756h1v1h-1zM1159 780h2v2h-2zM1159 783h1v1h-1zM1159 784h1v1h-1zM1159 787h1v1h-1zM1159 789h1v1h-1zM1159 790h1v1h-1zM1159 815h1v1h-1zM1159 816h1v1h-1zM1160 706h1v1h-1zM1160 709h1v1h-1zM1160 713h2v2h-2zM1160 714h1v1h-1zM1160 714h2v2h-2zM1160 716h1v1h-1zM1160 717h1v1h-1zM1160 717h2v2h-2zM1160 718h1v1h-1zM1160 723h2v2h-2zM1160 744h1v1h-1zM1160 745h1v1h-1zM1160 746h1v1h-1zM1160 749h1v1h-1zM1160 751h1v1h-1zM1160 752h1v1h-1zM1160 753h1v1h-1zM1160 756h1v1h-1zM1160 759h2v2h-2zM1160 780h1v1h-1zM1160 781h1v1h-1zM1160 783h1v1h-1zM1160 786h2v2h-2zM1160 787h1v1h-1zM1160 788h2v2h-2zM1160 789h1v1h-1zM1160 790h1v1h-1zM1160 791h1v1h-1zM1160 791h2v2h-2zM1160 824h2v2h-2zM1161 709h1v1h-1zM1161 713h1v1h-1zM1161 717h1v1h-1zM1161 719h1v1h-1zM1161 742h1v1h-1zM1161 748h2v2h-2zM1161 752h1v1h-1zM1161 753h1v1h-1zM1161 787h1v1h-1zM1161 787h2v2h-2zM1161 788h1v1h-1zM1161 790h1v1h-1zM1161 792h1v1h-1zM1161 812h1v1h-1zM1161 816h1v1h-1zM1162 712h1v1h-1zM1162 713h1v1h-1zM1162 717h1v1h-1zM1162 718h1v1h-1zM1162 720h1v1h-1zM1162 721h1v1h-1zM1162 724h1v1h-1zM1162 726h1v1h-1zM1162 729h1v1h-1zM1162 745h2v2h-2zM1162 750h2v2h-2zM1162 753h2v2h-2zM1162 754h1v1h-1zM1162 755h1v1h-1zM1162 757h1v1h-1zM1162 761h1v1h-1zM1162 781h1v1h-1zM1162 781h2v2h-2zM1162 784h2v2h-2zM1162 785h1v1h-1zM1162 786h1v1h-1zM1162 788h1v1h-1zM1162 788h2v2h-2zM1162 790h1v1h-1zM1162 790h2v2h-2zM1162 817h1v1h-1zM1162 818h1v1h-1zM1162 819h1v1h-1zM1162 821h1v1h-1zM1162 824h1v1h-1zM1162 826h1v1h-1zM1162 827h2v2h-2zM1163 710h1v1h-1zM1163 712h1v1h-1zM1163 713h1v1h-1zM1163 714h1v1h-1zM1163 714h2v2h-2zM1163 715h1v1h-1zM1163 716h1v1h-1zM1163 718h1v1h-1zM1163 718h2v2h-2zM1163 719h1v1h-1zM1163 720h1v1h-1zM1163 721h1v1h-1zM1163 723h1v1h-1zM1163 725h1v1h-1zM1163 741h1v1h-1zM1163 749h1v1h-1zM1163 749h2v2h-2zM1163 750h1v1h-1zM1163 751h1v1h-1zM1163 752h1v1h-1zM1163 752h2v2h-2zM1163 753h1v1h-1zM1163 754h1v1h-1zM1163 755h1v1h-1zM1163 758h1v1h-1zM1163 761h1v1h-1zM1163 780h1v1h-1zM1163 781h1v1h-1zM1163 782h1v1h-1zM1163 784h1v1h-1zM1163 785h1v1h-1zM1163 791h1v1h-1zM1163 812h2v2h-2zM1163 819h1v1h-1zM1163 824h1v1h-1zM1164 707h1v1h-1zM1164 713h1v1h-1zM1164 714h1v1h-1zM1164 715h1v1h-1zM1164 715h2v2h-2zM1164 716h1v1h-1zM1164 716h2v2h-2zM1164 717h1v1h-1zM1164 718h1v1h-1zM1164 720h1v1h-1zM1164 721h1v1h-1zM1164 723h1v1h-1zM1164 725h1v1h-1zM1164 728h2v2h-2zM1164 746h1v1h-1zM1164 747h1v1h-1zM1164 748h1v1h-1zM1164 749h1v1h-1zM1164 751h2v2h-2zM1164 752h1v1h-1zM1164 753h1v1h-1zM1164 754h1v1h-1zM1164 755h1v1h-1zM1164 760h1v1h-1zM1164 780h1v1h-1zM1164 789h2v2h-2zM1164 790h1v1h-1zM1164 791h1v1h-1zM1164 792h1v1h-1zM1164 819h1v1h-1zM1164 825h1v1h-1zM1165 713h1v1h-1zM1165 715h1v1h-1zM1165 716h1v1h-1zM1165 717h1v1h-1zM1165 717h2v2h-2zM1165 718h1v1h-1zM1165 719h1v1h-1zM1165 721h1v1h-1zM1165 722h1v1h-1zM1165 723h2v2h-2zM1165 724h1v1h-1zM1165 726h2v2h-2zM1165 744h1v1h-1zM1165 746h1v1h-1zM1165 747h1v1h-1zM1165 749h1v1h-1zM1165 750h1v1h-1zM1165 751h1v1h-1zM1165 751h2v2h-2zM1165 752h1v1h-1zM1165 753h1v1h-1zM1165 754h1v1h-1zM1165 756h1v1h-1zM1165 757h1v1h-1zM1165 761h1v1h-1zM1165 779h1v1h-1zM1165 779h2v2h-2zM1165 780h1v1h-1zM1165 781h1v1h-1zM1165 782h1v1h-1zM1165 784h1v1h-1zM1165 786h1v1h-1zM1165 787h2v2h-2zM1165 788h1v1h-1zM1165 789h2v2h-2zM1165 816h1v1h-1zM1165 817h1v1h-1zM1165 820h1v1h-1zM1165 822h1v1h-1zM1165 824h2v2h-2zM1166 706h1v1h-1zM1166 708h2v2h-2zM1166 711h1v1h-1zM1166 712h1v1h-1zM1166 713h1v1h-1zM1166 713h2v2h-2zM1166 714h1v1h-1zM1166 715h1v1h-1zM1166 716h1v1h-1zM1166 716h2v2h-2zM1166 717h1v1h-1zM1166 717h2v2h-2zM1166 718h1v1h-1zM1166 718h2v2h-2zM1166 719h1v1h-1zM1166 720h1v1h-1zM1166 720h2v2h-2zM1166 722h1v1h-1zM1166 723h1v1h-1zM1166 724h2v2h-2zM1166 740h1v1h-1zM1166 744h1v1h-1zM1166 745h1v1h-1zM1166 747h2v2h-2zM1166 750h1v1h-1zM1166 751h1v1h-1zM1166 752h1v1h-1zM1166 752h2v2h-2zM1166 753h2v2h-2zM1166 755h1v1h-1zM1166 755h2v2h-2zM1166 756h1v1h-1zM1166 756h2v2h-2zM1166 757h1v1h-1zM1166 779h1v1h-1zM1166 782h1v1h-1zM1166 782h2v2h-2zM1166 783h1v1h-1zM1166 783h2v2h-2zM1166 784h1v1h-1zM1166 785h1v1h-1zM1166 785h2v2h-2zM1166 786h1v1h-1zM1166 787h2v2h-2zM1166 791h1v1h-1zM1166 815h1v1h-1zM1166 817h1v1h-1zM1166 818h1v1h-1zM1166 824h1v1h-1zM1166 827h1v1h-1zM1166 828h1v1h-1zM1167 709h1v1h-1zM1167 711h2v2h-2zM1167 714h1v1h-1zM1167 715h1v1h-1zM1167 715h2v2h-2zM1167 716h1v1h-1zM1167 717h1v1h-1zM1167 717h2v2h-2zM1167 718h1v1h-1zM1167 718h2v2h-2zM1167 719h1v1h-1zM1167 720h1v1h-1zM1167 721h1v1h-1zM1167 723h1v1h-1zM1167 743h1v1h-1zM1167 748h1v1h-1zM1167 749h2v2h-2zM1167 750h1v1h-1zM1167 750h2v2h-2zM1167 751h1v1h-1zM1167 752h1v1h-1zM1167 753h1v1h-1zM1167 756h1v1h-1zM1167 756h2v2h-2zM1167 763h1v1h-1zM1167 780h1v1h-1zM1167 780h2v2h-2zM1167 781h1v1h-1zM1167 782h1v1h-1zM1167 788h1v1h-1zM1167 790h1v1h-1zM1167 790h2v2h-2zM1167 814h2v2h-2zM1167 815h1v1h-1zM1167 818h1v1h-1zM1167 819h1v1h-1zM1167 826h2v2h-2zM1168 709h1v1h-1zM1168 714h1v1h-1zM1168 714h2v2h-2zM1168 715h1v1h-1zM1168 716h1v1h-1zM1168 717h1v1h-1zM1168 718h1v1h-1zM1168 720h1v1h-1zM1168 723h1v1h-1zM1168 744h1v1h-1zM1168 745h1v1h-1zM1168 747h1v1h-1zM1168 749h1v1h-1zM1168 751h2v2h-2zM1168 752h1v1h-1zM1168 753h1v1h-1zM1168 753h2v2h-2zM1168 757h1v1h-1zM1168 758h1v1h-1zM1168 781h1v1h-1zM1168 782h1v1h-1zM1168 784h1v1h-1zM1168 786h1v1h-1zM1168 787h1v1h-1zM1168 787h2v2h-2zM1168 789h1v1h-1zM1168 790h1v1h-1zM1168 791h1v1h-1zM1168 792h1v1h-1zM1168 812h1v1h-1zM1168 817h1v1h-1zM1168 818h1v1h-1zM1168 819h1v1h-1zM1168 827h2v2h-2zM1169 713h1v1h-1zM1169 714h1v1h-1zM1169 715h1v1h-1zM1169 716h1v1h-1zM1169 717h1v1h-1zM1169 718h1v1h-1zM1169 718h2v2h-2zM1169 721h1v1h-1zM1169 725h1v1h-1zM1169 727h1v1h-1zM1169 746h1v1h-1zM1169 746h2v2h-2zM1169 749h1v1h-1zM1169 750h1v1h-1zM1169 751h1v1h-1zM1169 752h1v1h-1zM1169 754h1v1h-1zM1169 780h2v2h-2zM1169 782h1v1h-1zM1169 784h1v1h-1zM1169 785h2v2h-2zM1169 788h1v1h-1zM1169 789h1v1h-1zM1169 790h1v1h-1zM1169 812h1v1h-1zM1169 814h1v1h-1zM1169 816h1v1h-1zM1169 823h2v2h-2zM1170 712h1v1h-1zM1170 715h1v1h-1zM1170 719h1v1h-1zM1170 722h1v1h-1zM1170 723h1v1h-1zM1170 749h1v1h-1zM1170 749h2v2h-2zM1170 750h1v1h-1zM1170 750h2v2h-2zM1170 751h1v1h-1zM1170 752h1v1h-1zM1170 753h1v1h-1zM1170 754h1v1h-1zM1170 755h1v1h-1zM1170 780h1v1h-1zM1170 780h2v2h-2zM1170 781h1v1h-1zM1170 782h1v1h-1zM1170 783h1v1h-1zM1170 785h1v1h-1zM1170 786h1v1h-1zM1170 787h1v1h-1zM1170 790h1v1h-1zM1170 816h1v1h-1zM1170 817h1v1h-1zM1170 820h2v2h-2zM1170 824h1v1h-1zM1170 825h1v1h-1zM1170 827h1v1h-1zM1171 713h1v1h-1zM1171 714h1v1h-1zM1171 719h1v1h-1zM1171 721h1v1h-1zM1171 723h1v1h-1zM1171 748h1v1h-1zM1171 751h1v1h-1zM1171 753h1v1h-1zM1171 755h1v1h-1zM1171 756h1v1h-1zM1171 779h1v1h-1zM1171 781h1v1h-1zM1171 783h2v2h-2zM1171 788h1v1h-1zM1171 789h1v1h-1zM1171 789h2v2h-2zM1171 790h1v1h-1zM1171 791h1v1h-1zM1171 822h1v1h-1zM1171 822h2v2h-2zM1172 707h2v2h-2zM1172 711h2v2h-2zM1172 714h2v2h-2zM1172 715h2v2h-2zM1172 720h1v1h-1zM1172 721h2v2h-2zM1172 722h1v1h-1zM1172 742h1v1h-1zM1172 746h2v2h-2zM1172 748h2v2h-2zM1172 751h2v2h-2zM1172 758h1v1h-1zM1172 779h1v1h-1zM1172 781h1v1h-1zM1172 784h1v1h-1zM1172 785h1v1h-1zM1172 787h1v1h-1zM1172 789h1v1h-1zM1172 790h1v1h-1zM1172 791h2v2h-2zM1172 816h1v1h-1zM1172 819h1v1h-1zM1172 820h1v1h-1zM1172 821h1v1h-1zM1172 822h1v1h-1zM1173 712h1v1h-1zM1173 715h1v1h-1zM1173 716h1v1h-1zM1173 717h1v1h-1zM1173 718h1v1h-1zM1173 720h2v2h-2zM1173 724h1v1h-1zM1173 747h1v1h-1zM1173 749h1v1h-1zM1173 751h1v1h-1zM1173 784h1v1h-1zM1173 787h2v2h-2zM1173 790h1v1h-1zM1173 812h1v1h-1zM1173 818h1v1h-1zM1173 820h1v1h-1zM1173 823h1v1h-1zM1173 826h2v2h-2zM1174 716h1v1h-1zM1174 717h1v1h-1zM1174 750h1v1h-1zM1174 750h2v2h-2zM1174 754h1v1h-1zM1174 756h1v1h-1zM1174 780h2v2h-2zM1174 782h1v1h-1zM1174 784h1v1h-1zM1174 785h1v1h-1zM1174 786h1v1h-1zM1174 787h2v2h-2zM1174 789h1v1h-1zM1174 814h1v1h-1zM1174 817h1v1h-1zM1174 823h1v1h-1zM1174 824h2v2h-2zM1175 712h2v2h-2zM1175 782h1v1h-1zM1175 784h2v2h-2zM1175 786h1v1h-1zM1175 786h2v2h-2zM1175 787h1v1h-1zM1175 789h1v1h-1zM1175 790h1v1h-1zM1175 818h1v1h-1zM1176 713h1v1h-1zM1176 714h1v1h-1zM1176 721h1v1h-1zM1176 755h1v1h-1zM1176 781h1v1h-1zM1176 783h1v1h-1zM1176 789h1v1h-1zM1176 818h1v1h-1zM1176 824h1v1h-1zM1177 751h1v1h-1zM1177 781h1v1h-1zM1177 782h1v1h-1zM1177 783h1v1h-1zM1177 787h1v1h-1zM1177 789h1v1h-1zM1177 816h1v1h-1zM1177 819h1v1h-1zM1177 820h1v1h-1zM1177 821h1v1h-1zM1178 714h2v2h-2zM1178 782h1v1h-1zM1178 783h1v1h-1zM1178 784h1v1h-1zM1178 785h1v1h-1zM1178 787h2v2h-2zM1178 818h1v1h-1zM1178 821h1v1h-1z" fill="#000"/></svg><!--/BG-->
<!-- brush scrollbar -->
<div class="a" style="left:1187px;top:632px;width:15px;height:187px;border:1px solid #a8a39f;border-radius:4px;background:#d7d2cf"></div>
<div class="a" style="left:1188px;top:633px;width:13px;height:14px;background:linear-gradient(180deg,#fdfdfb,#eeeceb);border-radius:3px 3px 0 0;border-bottom:1px solid #b8b3af"></div>
<svg class="a" style="left:1190px;top:636px" width="9" height="6"><path d="M1 5 L4.5 1.5 L8 5" stroke="#222" stroke-width="1.4" fill="none"/></svg>
<div class="a" style="left:1188px;top:647px;width:13px;height:77px;background:linear-gradient(90deg,#8fb0de,#a6c2e8 50%,#8aaad8);border:1px solid #7c9fd0"></div>
<div class="a" style="left:1192px;top:680px;width:6px;height:1px;background:#4d6e9e;box-shadow:0 3px 0 #4d6e9e,0 6px 0 #4d6e9e"></div>
<div class="a" style="left:1188px;top:804px;width:13px;height:14px;background:linear-gradient(180deg,#fdfdfb,#eeeceb);border-radius:0 0 3px 3px;border-top:1px solid #b8b3af"></div>
<svg class="a" style="left:1190px;top:808px" width="9" height="6"><path d="M1 1 L4.5 4.5 L8 1" stroke="#222" stroke-width="1.4" fill="none"/></svg>
<div class="a" style="left:1013px;top:822px;width:188px;height:23px;border:1px solid #a5a09c;border-radius:4px;background:#fdfdfb"></div>
<div class="a lbl" style="left:1017px;top:826px">Basic,</div>
<svg class="a" style="left:1184px;top:829px" width="10" height="7"><path d="M1 1 L5 5 L9 1" stroke="#222" stroke-width="1.5" fill="none"/></svg>
<div class="a" style="left:1012px;top:848px;width:190px;height:34px;border:1px solid #111;background:#fdfdfb"></div>
<div class="a" style="left:1014px;top:850px;width:8px;height:30px;background:#c9dbf0"></div>
<div class="a" style="left:1189px;top:850px;width:12px;height:30px;background:#ebebe8"></div>
<svg class="a" style="left:1190px;top:854px" width="10" height="24"><path d="M2 6 L5 3 L8 6 M2 18 L5 21 L8 18" stroke="#333" stroke-width="1" fill="none"/></svg>
<div class="a lbl" style="left:1014px;top:857px">Espacement</div>
<div class="a lbl" style="left:1161px;top:857px">10,0</div>
<!-- brush buttons -->
<svg class="a" style="left:1021px;top:889px" width="17" height="17"><path d="M1.5 15.5 L3 11 L13 1.5 L16 4.5 L6 14 Z" fill="#444" stroke="#222" stroke-width="0.8"/><path d="M13 1.5 L16 4.5 L14.5 6 L11.5 3 Z" fill="#f4a0c0"/><path d="M1.5 15.5 L3 11 L6 14 Z" fill="#f2e3a0"/></svg>
<svg class="a" style="left:1060px;top:889px" width="17" height="17"><path d="M2 1 H9 L13 5 V16 H2 Z" fill="#f6f6f4" stroke="#999"/><path d="M10 8 H13 V11 H16 V14 H13 V17 H10 V14 H7 V11 H10 Z" fill="#73d216" stroke="#4e9a06" stroke-width="0.8"/></svg>
<svg class="a" style="left:1098px;top:889px" width="17" height="17"><rect x="4.5" y="5.5" width="11" height="10" fill="#d0d6de" stroke="#444"/><rect x="6" y="7" width="8" height="7" fill="#2e4a7a"/><rect x="1.5" y="1.5" width="11" height="10" fill="#e8eaee" stroke="#444"/><rect x="3" y="3" width="8" height="7" fill="#3f6aa8"/></svg>
<svg class="a" style="left:1136px;top:889px" width="17" height="17"><circle cx="8.5" cy="8.5" r="7" fill="none" stroke="#cbc6c2" stroke-width="2.4"/><path d="M4 4 L13 13" stroke="#cbc6c2" stroke-width="2.4"/></svg>
<svg class="a" style="left:1174px;top:889px" width="17" height="17"><path d="M14 9 A6 6 0 1 1 10 3.2" stroke="#4a86cf" stroke-width="3" fill="none"/><path d="M8 0.5 L15 2 L11 8 Z" fill="#4a86cf"/></svg>
<svg class="a" style="left:0;top:0" width="1280" height="1024" viewBox="0 0 1280 1024" pointer-events="none"><g fill="#9a0000" stroke="#f4faf4" stroke-width="1.2" stroke-opacity="0.7" paint-order="stroke" stroke-linejoin="round">
<path d="M669.9 497.9 L678.7 495.8 L688.1 495.8 L688.1 524.8 L696 524.8 L696 531.8 L671.1 531.8 L671.1 524.8 L679 524.8 L679 503.1 L669.9 504.9 Z"/>
<path d="M108 326 C111.5 324.6 116 323.9 120.3 323.9 C128.5 323.9 134 328 134 334.5 C134 338 132.5 340.5 129 344 L119 353.9 L134 353.9 L134 361 L108 361 L108 353.8 L120.5 341.3 C123.5 338.3 124.8 336.6 124.8 334.7 C124.8 331.9 122.8 330.2 119.8 330.2 C116.3 330.2 112 331.6 108 334.2 Z"/>
<path d="M113.1 713 C116.5 712.2 120.5 711.9 124.2 711.9 C132 711.9 136.8 715.5 136.8 721.5 C136.8 725 134.8 727.6 131.5 729 C135.5 730.3 137.8 734 137.8 739 C137.8 746 132 749.8 122.5 749.8 C118.5 749.8 114.5 749.2 111 748.2 L111 741.4 C114.5 742.8 118.5 743.7 122 743.7 C126 743.7 128.4 741.8 128.4 738.5 C128.4 735.2 126 733.2 122 733.2 L117.1 733.2 L117.1 727.1 L122.3 727.1 C125.8 727.1 127.6 725.5 127.6 722.8 C127.6 720 125.5 718.3 121.8 718.3 C119 718.3 116 718.8 113.1 719.6 Z"/>
<path fill-rule="evenodd" d="M1119.9 566.6 L1134.3 545 L1145.1 545 L1145.1 568.1 L1150.1 568.1 L1150.1 574.8 L1145.1 574.8 L1145.1 581 L1136 581 L1136 574.8 L1119.9 574.8 Z M1125.8 567.8 L1136 552.9 L1136 567.8 Z"/>
</g></svg>
</body></html>
